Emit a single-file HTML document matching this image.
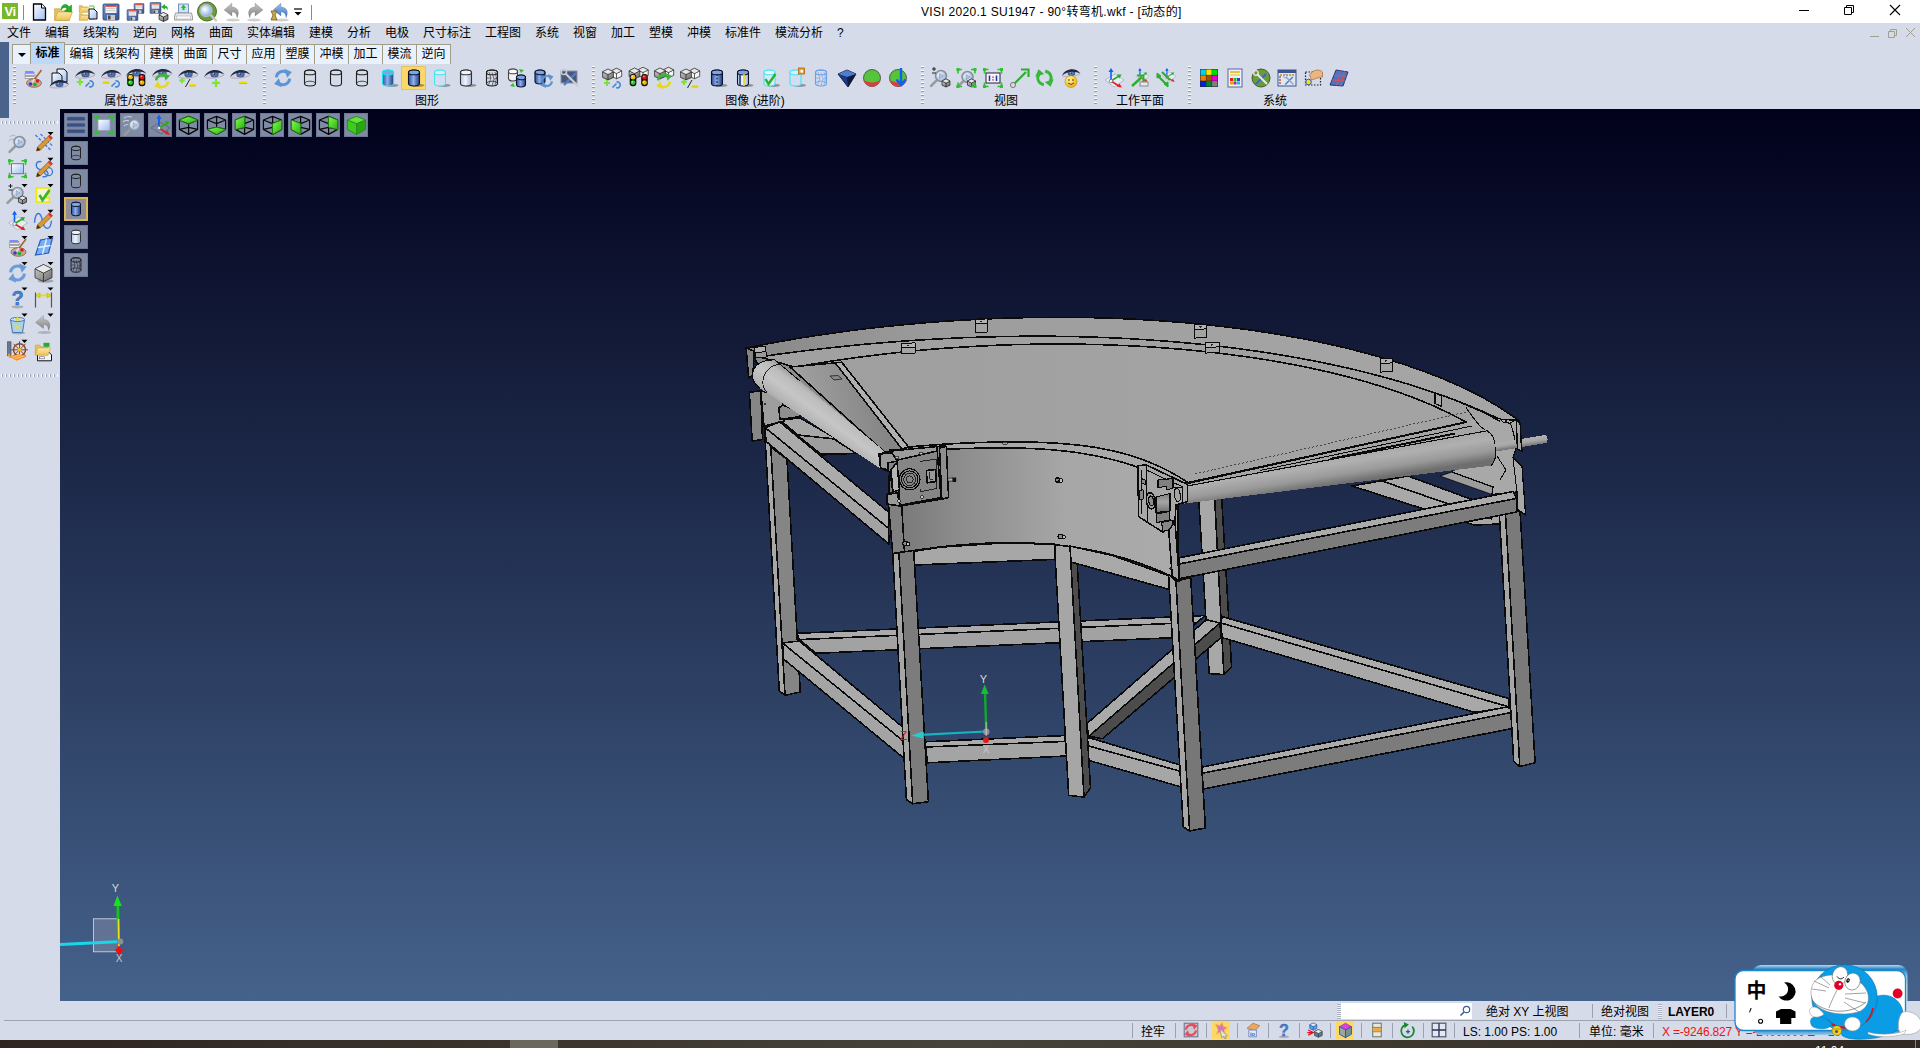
<!DOCTYPE html><html lang="zh"><head><meta charset="utf-8"><title>VISI 2020.1 SU1947 - 90°转弯机.wkf</title><style>
html,body{margin:0;padding:0;overflow:hidden}
body{width:1920px;height:1048px;overflow:hidden;position:relative;background:#d6dbe9;
 font-family:"Liberation Sans","Noto Sans CJK SC",sans-serif;font-size:12px;color:#000}
.a{position:absolute}
.t{position:absolute;white-space:nowrap;line-height:14px;height:14px}
#title{left:0;top:0;width:1920px;height:23px;background:#fff}
#menubar{left:0;top:23px;width:1920px;height:20px;background:#d6dbe9}
#lstrip{left:0;top:42px;width:9px;height:76px;background:#4a638a}
.tab{position:absolute;top:44px;height:20px;box-sizing:border-box;border:1px solid #a09d88;border-bottom:none;background:#e9f1fc;
 text-align:center;line-height:19px;font-size:12px}
.tab.on{top:42px;height:22px;background:#bdd9f7;font-weight:bold;line-height:21px;border-color:#a09d88}
.grip{position:absolute;width:3px;background:repeating-linear-gradient(180deg,#fff 0,#fff 1.5px,#8f98ae 1.5px,#8f98ae 2.5px,#d6dbe9 2.5px,#d6dbe9 4px)}
.hgrip{position:absolute;height:3px;background:repeating-linear-gradient(90deg,#fff 0,#fff 1px,#9aa3b8 1px,#9aa3b8 2px,#d6dbe9 2px,#d6dbe9 4px)}
.lbl{position:absolute;top:94px;height:14px;line-height:14px;font-size:12px;white-space:nowrap;transform:translateX(-50%)}
#view{left:60px;top:109px;width:1860px;height:892px;background:linear-gradient(180deg,#01011b 0%,#45628b 100%)}
.vb{position:absolute;width:24px;height:24px;background:#7f8aa5;box-sizing:border-box;border:1px solid #6e7892}
.vb.sel{background:#8e8f98;border:2px solid #d9b85c}
.sep{position:absolute;width:1px;background:#9aa0ad}
#task{left:0;top:1040px;width:1920px;height:8px;background:linear-gradient(90deg,#2e2420 0%,#3c362e 30%,#47433a 50%,#3f3a30 70%,#2f2823 100%)}
</style></head><body>
<svg width="0" height="0" style="position:absolute"><defs>
<linearGradient id="gBlueCyl" x1="0" x2="1" y1="0" y2="0"><stop offset="0" stop-color="#2b4f9e"/><stop offset=".45" stop-color="#8fb0ea"/><stop offset="1" stop-color="#1d3a80"/></linearGradient>
<linearGradient id="gPaleCyl" x1="0" x2="1" y1="0" y2="0"><stop offset="0" stop-color="#b8c8e6"/><stop offset=".45" stop-color="#eef3fc"/><stop offset="1" stop-color="#9fb2d6"/></linearGradient>
<linearGradient id="gDoc" x1="0" x2="1" y1="0" y2="1"><stop offset="0" stop-color="#ffffff"/><stop offset="1" stop-color="#9dbcf2"/></linearGradient>
<linearGradient id="gFolder" x1="0" x2="0" y1="0" y2="1"><stop offset="0" stop-color="#fbe7a4"/><stop offset="1" stop-color="#eec258"/></linearGradient>
<linearGradient id="gFloppy" x1="0" x2="1" y1="0" y2="1"><stop offset="0" stop-color="#6e8fca"/><stop offset="1" stop-color="#34528f"/></linearGradient>
<linearGradient id="gGrayArr" x1="0" x2="0" y1="0" y2="1"><stop offset="0" stop-color="#c8c8c8"/><stop offset="1" stop-color="#808080"/></linearGradient>
<linearGradient id="gBlueArr" x1="0" x2="0" y1="0" y2="1"><stop offset="0" stop-color="#9cc0ee"/><stop offset="1" stop-color="#3a74c0"/></linearGradient>
<linearGradient id="gCube" x1="0" x2="1" y1="0" y2="1"><stop offset="0" stop-color="#d0d0d0"/><stop offset="1" stop-color="#6c6c6c"/></linearGradient>
<radialGradient id="gIris" cx=".5" cy=".5" r=".5"><stop offset="0" stop-color="#20304e"/><stop offset=".35" stop-color="#5a7fb8"/><stop offset="1" stop-color="#3c5688"/></radialGradient>
<radialGradient id="gLens" cx=".4" cy=".4" r=".6"><stop offset="0" stop-color="#ffffff"/><stop offset="1" stop-color="#8db4e0"/></radialGradient>
<radialGradient id="gSmile" cx=".4" cy=".35" r=".65"><stop offset="0" stop-color="#fff7a0"/><stop offset="1" stop-color="#f0b000"/></radialGradient>
<linearGradient id="gGreenFace" x1="0" x2="1" y1="0" y2="1"><stop offset="0" stop-color="#7dff4a"/><stop offset="1" stop-color="#2fae16"/></linearGradient>

<linearGradient id="mShaft" gradientUnits="userSpaceOnUse" x1="1520" y1="438" x2="1521.5" y2="448"><stop offset="0" stop-color="#b4b4b4"/><stop offset=".5" stop-color="#a6a6a6"/><stop offset="1" stop-color="#6a6a6a"/></linearGradient>
<linearGradient id="mBlk" x1="0" x2="0" y1="0" y2="1"><stop offset="0" stop-color="#7c7c7c"/><stop offset=".45" stop-color="#a6a6a6"/><stop offset="1" stop-color="#6e6e6e"/></linearGradient>
<linearGradient id="mTri" gradientUnits="userSpaceOnUse" x1="800" y1="400" x2="870" y2="380"><stop offset="0" stop-color="#a2a2a2"/><stop offset="1" stop-color="#868686"/></linearGradient>
<linearGradient id="mWall" gradientUnits="userSpaceOnUse" x1="895" y1="0" x2="1175" y2="0">
 <stop offset="0" stop-color="#787878"/><stop offset=".25" stop-color="#8e8e8e"/><stop offset=".6" stop-color="#a6a6a6"/><stop offset="1" stop-color="#ababab"/></linearGradient>
<linearGradient id="mRollL" gradientUnits="userSpaceOnUse" x1="834" y1="399" x2="812" y2="429">
 <stop offset="0" stop-color="#5e5e5e"/><stop offset=".1" stop-color="#9c9c9c"/><stop offset=".28" stop-color="#bcbcbc"/><stop offset=".55" stop-color="#c6c6c6"/><stop offset=".85" stop-color="#b4b4b4"/><stop offset="1" stop-color="#9e9e9e"/></linearGradient>
<linearGradient id="mRollR" gradientUnits="userSpaceOnUse" x1="1335" y1="452" x2="1340" y2="484">
 <stop offset="0" stop-color="#a4a4a4"/><stop offset=".35" stop-color="#b0b0b0"/><stop offset=".7" stop-color="#9a9a9a"/><stop offset="1" stop-color="#6e6e6e"/></linearGradient>
<linearGradient id="mGuard" gradientUnits="userSpaceOnUse" x1="745" y1="0" x2="1520" y2="0">
 <stop offset="0" stop-color="#888888"/><stop offset=".25" stop-color="#9c9c9c"/><stop offset=".6" stop-color="#a2a2a2"/><stop offset="1" stop-color="#a6a6a6"/></linearGradient>
<linearGradient id="mBelt" gradientUnits="userSpaceOnUse" x1="840" y1="0" x2="1480" y2="0">
 <stop offset="0" stop-color="#9f9f9f"/><stop offset=".5" stop-color="#a3a3a3"/><stop offset="1" stop-color="#a3a3a3"/></linearGradient>
</defs></svg>
<div id="title" class="a"></div>
<div class="t" style="left:921px;top:5px;font-size:12px;letter-spacing:.3px" id="ttl">VISI 2020.1 SU1947 - 90°转弯机.wkf - [动态的]</div>
<svg class="a" style="left:1780px;top:0" width="140" height="23" viewBox="1780 0 140 23"><path d="M1799 10.5h10" stroke="#000" stroke-width="1" fill="none"/><path d="M1844.5 7.5h7v7h-7z M1846.5 7.5v-2h7v7h-2" stroke="#000" stroke-width="1" fill="none"/><path d="M1890 5l10 10M1900 5l-10 10" stroke="#000" stroke-width="1.1" fill="none"/></svg>
<div id="menubar" class="a"></div>
<div class="t" style="left:7px;top:26px">文件</div>
<div class="t" style="left:45px;top:26px">编辑</div>
<div class="t" style="left:83px;top:26px">线架构</div>
<div class="t" style="left:133px;top:26px">逆向</div>
<div class="t" style="left:171px;top:26px">网格</div>
<div class="t" style="left:209px;top:26px">曲面</div>
<div class="t" style="left:247px;top:26px">实体编辑</div>
<div class="t" style="left:309px;top:26px">建模</div>
<div class="t" style="left:347px;top:26px">分析</div>
<div class="t" style="left:385px;top:26px">电极</div>
<div class="t" style="left:423px;top:26px">尺寸标注</div>
<div class="t" style="left:485px;top:26px">工程图</div>
<div class="t" style="left:535px;top:26px">系统</div>
<div class="t" style="left:573px;top:26px">视窗</div>
<div class="t" style="left:611px;top:26px">加工</div>
<div class="t" style="left:649px;top:26px">塑模</div>
<div class="t" style="left:687px;top:26px">冲模</div>
<div class="t" style="left:725px;top:26px">标准件</div>
<div class="t" style="left:775px;top:26px">模流分析</div>
<div class="t" style="left:837px;top:26px">?</div>
<svg class="a" style="left:1860px;top:24px" width="60" height="18" viewBox="1860 24 60 18"><path d="M1870 36.5h9" stroke="#a39f8e" stroke-width="1" fill="none"/><path d="M1888.5 31.5h6v6h-6z M1890.5 31.5v-2h6v6h-2" stroke="#a39f8e" stroke-width="1" fill="none"/><path d="M1906 28l9 9M1915 28l-9 9" stroke="#a39f8e" stroke-width="1" fill="none"/></svg>
<div id="lstrip" class="a"></div>
<div class="tab" style="left:12px;width:19px"><svg width="17" height="19" viewBox="0 0 17 19" style="display:block"><path d="M5 8h8l-4 4z" fill="#000"/></svg></div>
<div class="tab on" style="left:30px;width:35px">标准</div>
<div class="tab" style="left:64px;width:35px">编辑</div>
<div class="tab" style="left:98px;width:47px">线架构</div>
<div class="tab" style="left:144px;width:35px">建模</div>
<div class="tab" style="left:178px;width:35px">曲面</div>
<div class="tab" style="left:212px;width:35px">尺寸</div>
<div class="tab" style="left:246px;width:35px">应用</div>
<div class="tab" style="left:280px;width:35px">塑膜</div>
<div class="tab" style="left:314px;width:35px">冲模</div>
<div class="tab" style="left:348px;width:35px">加工</div>
<div class="tab" style="left:382px;width:35px">模流</div>
<div class="tab" style="left:416px;width:35px">逆向</div>
<svg class="a" style="left:0px;top:0px" width="330" height="23" viewBox="0 0 330 23"><g transform="translate(10 11)" ><rect x="-8" y="-8" width="16" height="16" fill="#76b82a"/><text x="0" y="5" text-anchor="middle" font-family="Liberation Sans,sans-serif" font-weight="bold" font-size="13" fill="#fff" letter-spacing="-.5">Vi</text></g><g transform="translate(39.5 12)" ><path d="M-6 -8h8l4 4v12h-12z" fill="url(#gDoc)" stroke="#000" stroke-width="1.3"/><path d="M2 -8v4h4" fill="#fff" stroke="#000" stroke-width="1"/></g><g transform="translate(64 12)" ><g transform="translate(-1 1) scale(1.05)"><path d="M-8 -4h5l1.5 2h7.5v9h-14z" fill="#e8c060" stroke="#c09a38" stroke-width=".6"/><path d="M-8 7L-5 -1H9L6 7z" fill="url(#gFolder)" stroke="#c8a040" stroke-width=".6"/></g><path d="M-3 -2C-3 -8 3 -9 5 -5L7.5 -7L7.5 0L0.5 -1L3 -3C2 -5.5 -1 -5 -3 -2z" fill="#28b028" stroke="#0c7a0c" stroke-width=".5"/></g><g transform="translate(88 12)" ><g transform="translate(-4 -4) scale(0.6)"><path d="M-8 -4h5l1.5 2h7.5v9h-14z" fill="#e8c060" stroke="#c09a38" stroke-width=".6"/><path d="M-8 7L-5 -1H9L6 7z" fill="url(#gFolder)" stroke="#c8a040" stroke-width=".6"/></g><g transform="translate(-4 4) scale(0.6)"><path d="M-8 -4h5l1.5 2h7.5v9h-14z" fill="#e8c060" stroke="#c09a38" stroke-width=".6"/><path d="M-8 7L-5 -1H9L6 7z" fill="url(#gFolder)" stroke="#c8a040" stroke-width=".6"/></g><path d="M1 -6h5M6 -6v3M1 7h5M6 7v-2" stroke="#50c050" stroke-width="1" fill="none"/><path d="M1 -3h5l3 3v7h-8z" fill="url(#gDoc)" stroke="#111" stroke-width="1"/></g><g transform="translate(111 12)" ><g transform="translate(0 0) scale(1)"><rect x="-8" y="-8" width="16" height="16" rx="1" fill="url(#gFloppy)" stroke="#2c4478" stroke-width=".8"/><rect x="-5.5" y="-7" width="11" height="8" fill="#f2f2f2"/><rect x="-5.5" y="-7" width="11" height="1.8" fill="#e83828"/><path d="M-4.5 -3.5h9M-4.5 -1.5h9" stroke="#bbb" stroke-width=".7"/><rect x="-4" y="3" width="8" height="5" fill="#c8c8c8"/><rect x="-3" y="3.5" width="2.5" height="4" fill="#444"/></g></g><g transform="translate(135.5 12)" ><g transform="translate(3.5 -3.5) scale(0.62)"><rect x="-8" y="-8" width="16" height="16" rx="1" fill="url(#gFloppy)" stroke="#2c4478" stroke-width=".8"/><rect x="-5.5" y="-7" width="11" height="8" fill="#f2f2f2"/><rect x="-5.5" y="-7" width="11" height="1.8" fill="#e83828"/><path d="M-4.5 -3.5h9M-4.5 -1.5h9" stroke="#bbb" stroke-width=".7"/><rect x="-4" y="3" width="8" height="5" fill="#c8c8c8"/><rect x="-3" y="3.5" width="2.5" height="4" fill="#444"/></g><g transform="translate(-3 3) scale(0.68)"><rect x="-8" y="-8" width="16" height="16" rx="1" fill="url(#gFloppy)" stroke="#2c4478" stroke-width=".8"/><rect x="-5.5" y="-7" width="11" height="8" fill="#f2f2f2"/><rect x="-5.5" y="-7" width="11" height="1.8" fill="#e83828"/><path d="M-4.5 -3.5h9M-4.5 -1.5h9" stroke="#bbb" stroke-width=".7"/><rect x="-4" y="3" width="8" height="5" fill="#c8c8c8"/><rect x="-3" y="3.5" width="2.5" height="4" fill="#444"/></g></g><g transform="translate(159 12)" ><g transform="translate(-3.5 -4) scale(0.68)"><rect x="-8" y="-8" width="16" height="16" rx="1" fill="url(#gFloppy)" stroke="#2c4478" stroke-width=".8"/><rect x="-5.5" y="-7" width="11" height="8" fill="#f2f2f2"/><rect x="-5.5" y="-7" width="11" height="1.8" fill="#e83828"/><path d="M-4.5 -3.5h9M-4.5 -1.5h9" stroke="#bbb" stroke-width=".7"/><rect x="-4" y="3" width="8" height="5" fill="#c8c8c8"/><rect x="-3" y="3.5" width="2.5" height="4" fill="#444"/></g><path d="M0.0 2.75L4.5 0.5L9.0 2.75V7.475L4.5 9.5L0.0 7.475z" fill="url(#gCube)" stroke="#1a1a1a" stroke-width=".7"/><path d="M0.0 2.75L4.5 5L9.0 2.75M4.5 5V9.5" fill="none" stroke="#1a1a1a" stroke-width=".7"/><path d="M0.0 2.75L4.5 0.5L9.0 2.75L4.5 5z" fill="#e8e8e8" stroke="#1a1a1a" stroke-width=".5"/><path d="M2 -5L6 -8V-6.2C9 -6 9.5 -3 8 -1.5C8.3 -3.3 7.5 -4 6 -4V-2.5z" fill="#28b028"/></g><g transform="translate(183.5 12)" ><rect x="-5" y="-8" width="10" height="9" fill="#cfe0fa" stroke="#6080b0" stroke-width=".8"/><path d="M0 -7.5L-2.5 -4h1.5v2h2v-2h1.5z" fill="#20c020"/><path d="M-8 1h16l1 4v3h-18v-3z" fill="#e8e8e8" stroke="#888" stroke-width=".8"/><rect x="-7" y="4" width="14" height="3" fill="#fafafa" stroke="#aaa" stroke-width=".5"/></g><g transform="translate(207 11.5)" ><circle cx="0" cy="0" r="9.5" fill="#6a9c3c" stroke="#44701f" stroke-width="1"/><path d="M4 4L9 9" stroke="#c8c8c8" stroke-width="2.4" stroke-linecap="round"/><circle cx="-1" cy="-1" r="6" fill="url(#gLens)" stroke="#b0b8c4" stroke-width="1.6"/></g><g transform="translate(232 12)" ><g transform="translate(0 0) scale(1 1)"><ellipse cx="1" cy="8" rx="7" ry="1.5" fill="#00000030"/><path d="M-8 -2L0 -9V-5C6 -5 8 0 5 6C5 2 3 0 0 0V4z" fill="url(#gGrayArr)" stroke="#00000040" stroke-width=".5"/></g></g><g transform="translate(255 12)" ><g transform="translate(0 0) scale(-1 1)"><ellipse cx="1" cy="8" rx="7" ry="1.5" fill="#00000030"/><path d="M-8 -2L0 -9V-5C6 -5 8 0 5 6C5 2 3 0 0 0V4z" fill="url(#gGrayArr)" stroke="#00000040" stroke-width=".5"/></g></g><g transform="translate(279 12)" ><g transform="translate(2 0) scale(1 1)"><ellipse cx="1" cy="8" rx="7" ry="1.5" fill="#00000030"/><path d="M-8 -2L0 -9V-5C6 -5 8 0 5 6C5 2 3 0 0 0V4z" fill="url(#gBlueArr)" stroke="#00000040" stroke-width=".5"/></g><path d="M-8 -1h6l-2 4 2 5h-6l2 -5z" fill="#c8a850" stroke="#7a5c18" stroke-width=".8"/></g><g transform="translate(298 12)" ><path d="M-4 -3h8" stroke="#000" stroke-width="1.2"/><path d="M-3.5 0h7l-3.5 3.5z" fill="#000"/></g><path d="M23.5 5v15M311.5 5v15" stroke="#8a8a8a" stroke-width="1"/></svg>
<svg class="a" style="left:0px;top:64px" width="1400" height="30" viewBox="0 64 1400 30"><rect x="401.5" y="66.5" width="24" height="23" fill="#fbd868" stroke="#e4c262" stroke-width="1"/><g transform="translate(33 78)" ><path d="M-8 -7h8l2 2h-10z" fill="#7d8cff"/><path d="M-8 -4.5h9l1.5 2h-10.5z" fill="#e8e8ee" stroke="#666" stroke-width=".5"/><path d="M-8 -1.5h9l1.5 2h-10.5z" fill="#f4f4f4" stroke="#666" stroke-width=".5"/><ellipse cx="1" cy="5" rx="7.5" ry="4.3" fill="#c9a58c" stroke="#7a5038" stroke-width=".7"/><circle cx="-2.5" cy="6" r="1.8" fill="#2040e0"/><circle cx="2" cy="6.5" r="1.8" fill="#18b030"/><circle cx="4.5" cy="3" r="1.8" fill="#d02020"/><path d="M8.5 -8L1 2" stroke="#b0602a" stroke-width="1.6"/><path d="M1.5 1L-1 4.5" stroke="#ddd" stroke-width="2"/></g><g transform="translate(59 78)" ><path d="M-2 -9h7l3 3v10h-10z" fill="url(#gDoc)" stroke="#111" stroke-width="1"/><path d="M-7 -5h7l3 3v8h-10z" fill="url(#gDoc)" stroke="#111" stroke-width="1"/><g transform="translate(0 6) scale(0.95)"><path d="M-9.5 3C-6 -4 5.5 -5 10 0.8C6 4 -5 4.6 -9.5 3z" fill="#cfd3ea"/><ellipse cx="0.5" cy="0" rx="4.2" ry="3.5" fill="url(#gIris)"/><circle cx="-.6" cy="-1" r=".8" fill="#c8d8f4"/><path d="M-10 3C-6.5 -5.5 6 -6.5 10.5 0.8C5 -2.8 -5 -2.2 -10 3z" fill="#23283c"/><path d="M-9.5 3.4C-5 4.9 5 4.4 10 1.1" fill="none" stroke="#b493a2" stroke-width=".7"/></g></g><g transform="translate(85 78)" ><g transform="translate(0 -4) scale(1.0)"><path d="M-9.5 3C-6 -4 5.5 -5 10 0.8C6 4 -5 4.6 -9.5 3z" fill="#cfd3ea"/><ellipse cx="0.5" cy="0" rx="4.2" ry="3.5" fill="url(#gIris)"/><circle cx="-.6" cy="-1" r=".8" fill="#c8d8f4"/><path d="M-10 3C-6.5 -5.5 6 -6.5 10.5 0.8C5 -2.8 -5 -2.2 -10 3z" fill="#23283c"/><path d="M-9.5 3.4C-5 4.9 5 4.4 10 1.1" fill="none" stroke="#b493a2" stroke-width=".7"/></g><path d="M-8.2 4h6.4M-5 0.7999999999999998v6.4" stroke="#7fe23a" stroke-width="2.2" fill="none"/><path d="M0.5 8.5L4.5 4.5" stroke="#4a86d8" stroke-width="1.7" fill="none"/><path d="M4.5 3a3 3 0 1 1 -.5 5.6" stroke="#4a86d8" stroke-width="1.6" fill="none"/></g><g transform="translate(111 78)" ><g transform="translate(0 -4) scale(1.0)"><path d="M-9.5 3C-6 -4 5.5 -5 10 0.8C6 4 -5 4.6 -9.5 3z" fill="#cfd3ea"/><ellipse cx="0.5" cy="0" rx="4.2" ry="3.5" fill="url(#gIris)"/><circle cx="-.6" cy="-1" r=".8" fill="#c8d8f4"/><path d="M-10 3C-6.5 -5.5 6 -6.5 10.5 0.8C5 -2.8 -5 -2.2 -10 3z" fill="#23283c"/><path d="M-9.5 3.4C-5 4.9 5 4.4 10 1.1" fill="none" stroke="#b493a2" stroke-width=".7"/></g><path d="M-8.2 4h6.4" stroke="#f0e400" stroke-width="2.2" fill="none"/><path d="M-8.2 5h6.4" stroke="#b8a800" stroke-width=".6" fill="none"/><path d="M0.5 8.5L4.5 4.5" stroke="#4a86d8" stroke-width="1.7" fill="none"/><path d="M4.5 3a3 3 0 1 1 -.5 5.6" stroke="#4a86d8" stroke-width="1.6" fill="none"/></g><g transform="translate(136 78)" ><g transform="translate(0 -5) scale(1.0)"><path d="M-9.5 3C-6 -4 5.5 -5 10 0.8C6 4 -5 4.6 -9.5 3z" fill="#cfd3ea"/><ellipse cx="0.5" cy="0" rx="4.2" ry="3.5" fill="url(#gIris)"/><circle cx="-.6" cy="-1" r=".8" fill="#c8d8f4"/><path d="M-10 3C-6.5 -5.5 6 -6.5 10.5 0.8C5 -2.8 -5 -2.2 -10 3z" fill="#23283c"/><path d="M-9.5 3.4C-5 4.9 5 4.4 10 1.1" fill="none" stroke="#b493a2" stroke-width=".7"/></g><rect x="-8.8" y="-4.1" width="6.6" height="12.399999999999999" rx="3" fill="#0c0c0c"/><circle cx="-5.5" cy="-0.7999999999999998" r="2.4" fill="#f0c000"/><circle cx="-6.2" cy="-1.5" r=".8" fill="#ffffffaa"/><circle cx="-5.5" cy="4.6000000000000005" r="2.4" fill="#20d020"/><circle cx="-6.2" cy="3.9000000000000004" r=".8" fill="#ffffffaa"/><rect x="2.7" y="-4.1" width="6.6" height="12.399999999999999" rx="3" fill="#0c0c0c"/><circle cx="6" cy="-0.7999999999999998" r="2.4" fill="#e01010"/><circle cx="5.3" cy="-1.5" r=".8" fill="#ffffffaa"/><circle cx="6" cy="4.6000000000000005" r="2.4" fill="#f0b000"/><circle cx="5.3" cy="3.9000000000000004" r=".8" fill="#ffffffaa"/></g><g transform="translate(162 78)" ><g transform="translate(0 -5) scale(1.0)"><path d="M-9.5 3C-6 -4 5.5 -5 10 0.8C6 4 -5 4.6 -9.5 3z" fill="#cfd3ea"/><ellipse cx="0.5" cy="0" rx="4.2" ry="3.5" fill="url(#gIris)"/><circle cx="-.6" cy="-1" r=".8" fill="#c8d8f4"/><path d="M-10 3C-6.5 -5.5 6 -6.5 10.5 0.8C5 -2.8 -5 -2.2 -10 3z" fill="#23283c"/><path d="M-9.5 3.4C-5 4.9 5 4.4 10 1.1" fill="none" stroke="#b493a2" stroke-width=".7"/></g><g transform="translate(0 3) scale(0.95)"><path d="M-6.2 -0.6A6.2 6.2 0 0 1 3.6 -5" fill="none" stroke="#3fb53a" stroke-width="2.7"/><path d="M1.2 -8.6L8.2 -5.6L3.8 -0.2z" fill="#3fb53a"/><g transform="rotate(180)"><path d="M-6.2 -0.6A6.2 6.2 0 0 1 3.6 -5" fill="none" stroke="#e6d820" stroke-width="2.7"/><path d="M1.2 -8.6L8.2 -5.6L3.8 -0.2z" fill="#e6d820"/></g></g></g><g transform="translate(188 78)" ><g transform="translate(0 -4) scale(1.0)"><path d="M-9.5 3C-6 -4 5.5 -5 10 0.8C6 4 -5 4.6 -9.5 3z" fill="#cfd3ea"/><ellipse cx="0.5" cy="0" rx="4.2" ry="3.5" fill="url(#gIris)"/><circle cx="-.6" cy="-1" r=".8" fill="#c8d8f4"/><path d="M-10 3C-6.5 -5.5 6 -6.5 10.5 0.8C5 -2.8 -5 -2.2 -10 3z" fill="#23283c"/><path d="M-9.5 3.4C-5 4.9 5 4.4 10 1.1" fill="none" stroke="#b493a2" stroke-width=".7"/></g><path d="M-8.8 2.5h5.6M-6 -0.2999999999999998v5.6" stroke="#7fe23a" stroke-width="2.2" fill="none"/><path d="M-2.5 9L2 1" stroke="#222" stroke-width="1"/><path d="M1.2999999999999998 7h6.4" stroke="#f0e400" stroke-width="2.2" fill="none"/><path d="M1.2999999999999998 8h6.4" stroke="#b8a800" stroke-width=".6" fill="none"/></g><g transform="translate(214 78)" ><g transform="translate(0 -4) scale(1.0)"><path d="M-9.5 3C-6 -4 5.5 -5 10 0.8C6 4 -5 4.6 -9.5 3z" fill="#cfd3ea"/><ellipse cx="0.5" cy="0" rx="4.2" ry="3.5" fill="url(#gIris)"/><circle cx="-.6" cy="-1" r=".8" fill="#c8d8f4"/><path d="M-10 3C-6.5 -5.5 6 -6.5 10.5 0.8C5 -2.8 -5 -2.2 -10 3z" fill="#23283c"/><path d="M-9.5 3.4C-5 4.9 5 4.4 10 1.1" fill="none" stroke="#b493a2" stroke-width=".7"/></g><path d="M-2 5h8M2 1v8" stroke="#7fe23a" stroke-width="2.2" fill="none"/></g><g transform="translate(240 78)" ><g transform="translate(0 -4) scale(1.0)"><path d="M-9.5 3C-6 -4 5.5 -5 10 0.8C6 4 -5 4.6 -9.5 3z" fill="#cfd3ea"/><ellipse cx="0.5" cy="0" rx="4.2" ry="3.5" fill="url(#gIris)"/><circle cx="-.6" cy="-1" r=".8" fill="#c8d8f4"/><path d="M-10 3C-6.5 -5.5 6 -6.5 10.5 0.8C5 -2.8 -5 -2.2 -10 3z" fill="#23283c"/><path d="M-9.5 3.4C-5 4.9 5 4.4 10 1.1" fill="none" stroke="#b493a2" stroke-width=".7"/></g><path d="M-1.2000000000000002 4.5h8.4" stroke="#f0e400" stroke-width="2.2" fill="none"/><path d="M-1.2000000000000002 5.5h8.4" stroke="#b8a800" stroke-width=".6" fill="none"/></g><g transform="translate(283 78)" ><g transform="translate(0 0) scale(1.08)"><path d="M-6.2 -0.6A6.2 6.2 0 0 1 3.6 -5" fill="none" stroke="#5c94d6" stroke-width="2.7"/><path d="M1.2 -8.6L8.2 -5.6L3.8 -0.2z" fill="#5c94d6"/><g transform="rotate(180)"><path d="M-6.2 -0.6A6.2 6.2 0 0 1 3.6 -5" fill="none" stroke="#5c94d6" stroke-width="2.7"/><path d="M1.2 -8.6L8.2 -5.6L3.8 -0.2z" fill="#5c94d6"/></g></g></g><g transform="translate(310 78)" ><path d="M-5.5 -5.6V5.6A5.5 2.4 0 0 0 5.5 5.6V-5.6A5.5 2.4 0 0 0 -5.5 -5.6z" fill="none" stroke="#222" stroke-width="1.1"/><ellipse cx="0" cy="-5.6" rx="5.5" ry="2.4" fill="none" stroke="#222" stroke-width="1.1"/><path d="M-5.5 5.6A5.5 2.4 0 0 1 5.5 5.6" fill="none" stroke="#222" stroke-width="0.77"/></g><g transform="translate(336 78)" ><path d="M-5.5 -5.6V5.6A5.5 2.4 0 0 0 5.5 5.6V-5.6A5.5 2.4 0 0 0 -5.5 -5.6z" fill="none" stroke="#222" stroke-width="1.1"/><ellipse cx="0" cy="-5.6" rx="5.5" ry="2.4" fill="none" stroke="#222" stroke-width="1.1"/></g><g transform="translate(362 78)" ><path d="M-5.5 -5.6V5.6A5.5 2.4 0 0 0 5.5 5.6V-5.6A5.5 2.4 0 0 0 -5.5 -5.6z" fill="none" stroke="#222" stroke-width="1.1"/><ellipse cx="0" cy="-5.6" rx="5.5" ry="2.4" fill="none" stroke="#222" stroke-width="1.1"/><path d="M-5.5 5.6A5.5 2.4 0 0 1 5.5 5.6" fill="none" stroke="#222" stroke-width="0.77"/></g><g transform="translate(388 78)" ><ellipse cx="4" cy="7.3999999999999995" rx="6.5" ry="1.6" fill="#00000055"/><path d="M-5.5 -5.6V5.6A5.5 2.4 0 0 0 5.5 5.6V-5.6A5.5 2.4 0 0 0 -5.5 -5.6z" fill="url(#gBlueCyl)" stroke="#20e0f0" stroke-width="1.1"/><ellipse cx="0" cy="-5.6" rx="5.5" ry="2.4" fill="#7fa4e4" stroke="#20e0f0" stroke-width="1.1"/></g><g transform="translate(414 78)" ><ellipse cx="4" cy="7.3999999999999995" rx="6.5" ry="1.6" fill="#00000055"/><path d="M-5.5 -5.6V5.6A5.5 2.4 0 0 0 5.5 5.6V-5.6A5.5 2.4 0 0 0 -5.5 -5.6z" fill="url(#gBlueCyl)" stroke="#0a1430" stroke-width="1.1"/><ellipse cx="0" cy="-5.6" rx="5.5" ry="2.4" fill="#7fa4e4" stroke="#0a1430" stroke-width="1.1"/></g><g transform="translate(440 78)" ><ellipse cx="4" cy="7.3999999999999995" rx="6.5" ry="1.6" fill="#00000055"/><path d="M-5.5 -5.6V5.6A5.5 2.4 0 0 0 5.5 5.6V-5.6A5.5 2.4 0 0 0 -5.5 -5.6z" fill="#d4dcf0" stroke="#40e8f0" stroke-width="1.1"/><ellipse cx="0" cy="-5.6" rx="5.5" ry="2.4" fill="#e4eaf8" stroke="#40e8f0" stroke-width="1.1"/></g><g transform="translate(466 78)" ><ellipse cx="4" cy="7.3999999999999995" rx="6.5" ry="1.6" fill="#00000055"/><path d="M-5.5 -5.6V5.6A5.5 2.4 0 0 0 5.5 5.6V-5.6A5.5 2.4 0 0 0 -5.5 -5.6z" fill="url(#gPaleCyl)" stroke="#333" stroke-width="1.1"/><ellipse cx="0" cy="-5.6" rx="5.5" ry="2.4" fill="#eef2fa" stroke="#333" stroke-width="1.1"/></g><g transform="translate(492 78)" ><path d="M-5.5 -5.6V5.6A5.5 2.4 0 0 0 5.5 5.6V-5.6A5.5 2.4 0 0 0 -5.5 -5.6z" fill="none" stroke="#222" stroke-width="1.1"/><ellipse cx="0" cy="-5.6" rx="5.5" ry="2.4" fill="none" stroke="#222" stroke-width="1.1"/><path d="M-5.5 5.6A5.5 2.4 0 0 1 5.5 5.6" fill="none" stroke="#222" stroke-width="0.77"/><path d="M-3 -6L-1 0L-3.5 7M0 -5.5L2 1L0 8M3 -6L4.5 0L3 7M-5 0L-1 0M2 1L5.5 0" stroke="#222" stroke-width=".6" fill="none"/></g><g transform="translate(517 78)" ><path d="M-8.5 -6.6V0.6000000000000001A4.5 2.4 0 0 0 0.5 0.6000000000000001V-6.6A4.5 2.4 0 0 0 -8.5 -6.6z" fill="#f2f2f2" stroke="#444" stroke-width="1.1"/><ellipse cx="-4" cy="-6.6" rx="4.5" ry="2.4" fill="#fff" stroke="#444" stroke-width="1.1"/><path d="M-0.5 -0.6000000000000001V6.6A4.5 2.4 0 0 0 8.5 6.6V-0.6000000000000001A4.5 2.4 0 0 0 -0.5 -0.6000000000000001z" fill="url(#gBlueCyl)" stroke="#0a1430" stroke-width="1.1"/><ellipse cx="4" cy="-0.6000000000000001" rx="4.5" ry="2.4" fill="#7fa4e4" stroke="#0a1430" stroke-width="1.1"/><path d="M2 -9l5 1-3 3z" fill="#30c030"/><path d="M-2 9l-5-1 3-3z" fill="#30c030"/></g><g transform="translate(543 78)" ><path d="M-8.0 -5.6V3.6A5.0 2.4 0 0 0 2.0 3.6V-5.6A5.0 2.4 0 0 0 -8.0 -5.6z" fill="url(#gBlueCyl)" stroke="#0a1430" stroke-width="1.1"/><ellipse cx="-3" cy="-5.6" rx="5.0" ry="2.4" fill="#7fa4e4" stroke="#0a1430" stroke-width="1.1"/><g transform="translate(4 3) scale(0.8)"><path d="M-6.2 -0.6A6.2 6.2 0 0 1 3.6 -5" fill="none" stroke="#5c94d6" stroke-width="2.7"/><path d="M1.2 -8.6L8.2 -5.6L3.8 -0.2z" fill="#5c94d6"/><g transform="rotate(180)"><path d="M-6.2 -0.6A6.2 6.2 0 0 1 3.6 -5" fill="none" stroke="#5c94d6" stroke-width="2.7"/><path d="M1.2 -8.6L8.2 -5.6L3.8 -0.2z" fill="#5c94d6"/></g></g></g><g transform="translate(570 78)" ><rect x="-9" y="-7" width="16" height="12" fill="#4a5878" stroke="#8a93a8" stroke-width="1"/><path d="M-6 7L6 -5" stroke="#4a7ed0" stroke-width="2.4"/><path d="M-5 -5L8 8" stroke="#c8ccd4" stroke-width="2.2"/><circle cx="-6" cy="-6" r="2.6" fill="none" stroke="#c8ccd4" stroke-width="1.4"/></g><g transform="translate(612 78)" ><path d="M-0.7000000000000002 -7.1L4.5 -9.7L9.7 -7.1V-1.6399999999999997L4.5 0.7000000000000002L-0.7000000000000002 -1.6399999999999997z" fill="#f4f4f4" stroke="#1a1a1a" stroke-width=".7"/><path d="M-0.7000000000000002 -7.1L4.5 -4.5L9.7 -7.1M4.5 -4.5V0.7000000000000002" fill="none" stroke="#1a1a1a" stroke-width=".7"/><path d="M-0.7000000000000002 -7.1L4.5 -9.7L9.7 -7.1L4.5 -4.5z" fill="#e8e8e8" stroke="#1a1a1a" stroke-width=".5"/><path d="M-9.4 -6.2L-4 -8.9L1.4000000000000004 -6.2V-0.5299999999999994L-4 1.9000000000000004L-9.4 -0.5299999999999994z" fill="url(#gCube)" stroke="#1a1a1a" stroke-width=".7"/><path d="M-9.4 -6.2L-4 -3.5L1.4000000000000004 -6.2M-4 -3.5V1.9000000000000004" fill="none" stroke="#1a1a1a" stroke-width=".7"/><path d="M-9.4 -6.2L-4 -8.9L1.4000000000000004 -6.2L-4 -3.5z" fill="#e8e8e8" stroke="#1a1a1a" stroke-width=".5"/><path d="M-8 5h6M-5 2v6" stroke="#7fe23a" stroke-width="2.2" fill="none"/><path d="M0.5 9.5L4.5 5.5" stroke="#4a86d8" stroke-width="1.7" fill="none"/><path d="M4.5 4a3 3 0 1 1 -.5 5.6" stroke="#4a86d8" stroke-width="1.6" fill="none"/></g><g transform="translate(638.5 78)" ><path d="M-0.7000000000000002 -8.1L4.5 -10.7L9.7 -8.1V-2.6399999999999997L4.5 -0.2999999999999998L-0.7000000000000002 -2.6399999999999997z" fill="#f4f4f4" stroke="#1a1a1a" stroke-width=".7"/><path d="M-0.7000000000000002 -8.1L4.5 -5.5L9.7 -8.1M4.5 -5.5V-0.2999999999999998" fill="none" stroke="#1a1a1a" stroke-width=".7"/><path d="M-0.7000000000000002 -8.1L4.5 -10.7L9.7 -8.1L4.5 -5.5z" fill="#e8e8e8" stroke="#1a1a1a" stroke-width=".5"/><path d="M-9.4 -7.2L-4 -9.9L1.4000000000000004 -7.2V-1.5299999999999994L-4 0.9000000000000004L-9.4 -1.5299999999999994z" fill="url(#gCube)" stroke="#1a1a1a" stroke-width=".7"/><path d="M-9.4 -7.2L-4 -4.5L1.4000000000000004 -7.2M-4 -4.5V0.9000000000000004" fill="none" stroke="#1a1a1a" stroke-width=".7"/><path d="M-9.4 -7.2L-4 -9.9L1.4000000000000004 -7.2L-4 -4.5z" fill="#e8e8e8" stroke="#1a1a1a" stroke-width=".5"/><rect x="-8.8" y="-4.1" width="6.6" height="12.399999999999999" rx="3" fill="#0c0c0c"/><circle cx="-5.5" cy="-0.7999999999999998" r="2.4" fill="#f0c000"/><circle cx="-6.2" cy="-1.5" r=".8" fill="#ffffffaa"/><circle cx="-5.5" cy="4.6000000000000005" r="2.4" fill="#20d020"/><circle cx="-6.2" cy="3.9000000000000004" r=".8" fill="#ffffffaa"/><rect x="2.7" y="-4.1" width="6.6" height="12.399999999999999" rx="3" fill="#0c0c0c"/><circle cx="6" cy="-0.7999999999999998" r="2.4" fill="#e01010"/><circle cx="5.3" cy="-1.5" r=".8" fill="#ffffffaa"/><circle cx="6" cy="4.6000000000000005" r="2.4" fill="#f0b000"/><circle cx="5.3" cy="3.9000000000000004" r=".8" fill="#ffffffaa"/></g><g transform="translate(664 78)" ><path d="M-0.7000000000000002 -8.1L4.5 -10.7L9.7 -8.1V-2.6399999999999997L4.5 -0.2999999999999998L-0.7000000000000002 -2.6399999999999997z" fill="#f4f4f4" stroke="#1a1a1a" stroke-width=".7"/><path d="M-0.7000000000000002 -8.1L4.5 -5.5L9.7 -8.1M4.5 -5.5V-0.2999999999999998" fill="none" stroke="#1a1a1a" stroke-width=".7"/><path d="M-0.7000000000000002 -8.1L4.5 -10.7L9.7 -8.1L4.5 -5.5z" fill="#e8e8e8" stroke="#1a1a1a" stroke-width=".5"/><path d="M-9.4 -7.2L-4 -9.9L1.4000000000000004 -7.2V-1.5299999999999994L-4 0.9000000000000004L-9.4 -1.5299999999999994z" fill="url(#gCube)" stroke="#1a1a1a" stroke-width=".7"/><path d="M-9.4 -7.2L-4 -4.5L1.4000000000000004 -7.2M-4 -4.5V0.9000000000000004" fill="none" stroke="#1a1a1a" stroke-width=".7"/><path d="M-9.4 -7.2L-4 -9.9L1.4000000000000004 -7.2L-4 -4.5z" fill="#e8e8e8" stroke="#1a1a1a" stroke-width=".5"/><g transform="translate(0 3) scale(0.95)"><path d="M-6.2 -0.6A6.2 6.2 0 0 1 3.6 -5" fill="none" stroke="#3fb53a" stroke-width="2.7"/><path d="M1.2 -8.6L8.2 -5.6L3.8 -0.2z" fill="#3fb53a"/><g transform="rotate(180)"><path d="M-6.2 -0.6A6.2 6.2 0 0 1 3.6 -5" fill="none" stroke="#e6d820" stroke-width="2.7"/><path d="M1.2 -8.6L8.2 -5.6L3.8 -0.2z" fill="#e6d820"/></g></g></g><g transform="translate(690 78)" ><path d="M-0.7000000000000002 -7.1L4.5 -9.7L9.7 -7.1V-1.6399999999999997L4.5 0.7000000000000002L-0.7000000000000002 -1.6399999999999997z" fill="#f4f4f4" stroke="#1a1a1a" stroke-width=".7"/><path d="M-0.7000000000000002 -7.1L4.5 -4.5L9.7 -7.1M4.5 -4.5V0.7000000000000002" fill="none" stroke="#1a1a1a" stroke-width=".7"/><path d="M-0.7000000000000002 -7.1L4.5 -9.7L9.7 -7.1L4.5 -4.5z" fill="#e8e8e8" stroke="#1a1a1a" stroke-width=".5"/><path d="M-9.4 -6.2L-4 -8.9L1.4000000000000004 -6.2V-0.5299999999999994L-4 1.9000000000000004L-9.4 -0.5299999999999994z" fill="url(#gCube)" stroke="#1a1a1a" stroke-width=".7"/><path d="M-9.4 -6.2L-4 -3.5L1.4000000000000004 -6.2M-4 -3.5V1.9000000000000004" fill="none" stroke="#1a1a1a" stroke-width=".7"/><path d="M-9.4 -6.2L-4 -8.9L1.4000000000000004 -6.2L-4 -3.5z" fill="#e8e8e8" stroke="#1a1a1a" stroke-width=".5"/><path d="M-8.8 4h5.6M-6 1.2000000000000002v5.6" stroke="#7fe23a" stroke-width="2.2" fill="none"/><path d="M-2.5 10L2 2" stroke="#222" stroke-width="1"/><path d="M1.7999999999999998 8h6.4" stroke="#f0e400" stroke-width="2.2" fill="none"/><path d="M1.7999999999999998 9h6.4" stroke="#b8a800" stroke-width=".6" fill="none"/></g><g transform="translate(717 78)" ><ellipse cx="4" cy="7.3999999999999995" rx="6.5" ry="1.6" fill="#00000055"/><path d="M-5.5 -5.6V5.6A5.5 2.4 0 0 0 5.5 5.6V-5.6A5.5 2.4 0 0 0 -5.5 -5.6z" fill="url(#gBlueCyl)" stroke="#0a1430" stroke-width="1.1"/><ellipse cx="0" cy="-5.6" rx="5.5" ry="2.4" fill="#7fa4e4" stroke="#0a1430" stroke-width="1.1"/><path d="M0 -4V8" stroke="#111" stroke-width="1" stroke-dasharray="2 1.5"/></g><g transform="translate(743 78)" ><ellipse cx="4" cy="7.3999999999999995" rx="6.5" ry="1.6" fill="#00000055"/><path d="M-5.5 -5.6V5.6A5.5 2.4 0 0 0 5.5 5.6V-5.6A5.5 2.4 0 0 0 -5.5 -5.6z" fill="url(#gPaleCyl)" stroke="#0a1430" stroke-width="1.1"/><ellipse cx="0" cy="-5.6" rx="5.5" ry="2.4" fill="#7fa4e4" stroke="#0a1430" stroke-width="1.1"/><path d="M1 -4V8" stroke="#e8d820" stroke-width="1.6"/><path d="M-3 -4V8" stroke="#1d3a80" stroke-width="1.6"/></g><g transform="translate(769.5 78)" ><ellipse cx="4" cy="7.3999999999999995" rx="6.5" ry="1.6" fill="#00000055"/><path d="M-5.5 -5.6V5.6A5.5 2.4 0 0 0 5.5 5.6V-5.6A5.5 2.4 0 0 0 -5.5 -5.6z" fill="#dfe6f6" stroke="#40e8f0" stroke-width="1.1"/><ellipse cx="0" cy="-5.6" rx="5.5" ry="2.4" fill="#eef2fa" stroke="#40e8f0" stroke-width="1.1"/><path d="M-4 1L-1 6L6 -4" stroke="#28b428" stroke-width="2.4" fill="none"/></g><g transform="translate(795.5 78)" ><ellipse cx="4" cy="7.3999999999999995" rx="6.5" ry="1.6" fill="#00000055"/><path d="M-5.5 -5.6V5.6A5.5 2.4 0 0 0 5.5 5.6V-5.6A5.5 2.4 0 0 0 -5.5 -5.6z" fill="#d4dcf0" stroke="#40e8f0" stroke-width="1.1"/><ellipse cx="0" cy="-5.6" rx="5.5" ry="2.4" fill="#e4eaf8" stroke="#40e8f0" stroke-width="1.1"/><rect x="3" y="-10" width="6" height="6" fill="#f0a030" stroke="#b06010" stroke-width=".8"/><rect x="5" y="-8" width="2.5" height="2.5" fill="#fff"/></g><g transform="translate(821 78)" ><path d="M-5.5 -5.6V5.6A5.5 2.4 0 0 0 5.5 5.6V-5.6A5.5 2.4 0 0 0 -5.5 -5.6z" fill="none" stroke="#6aa0e8" stroke-width="1.1"/><ellipse cx="0" cy="-5.6" rx="5.5" ry="2.4" fill="none" stroke="#6aa0e8" stroke-width="1.1"/><path d="M-5.5 5.6A5.5 2.4 0 0 1 5.5 5.6" fill="none" stroke="#6aa0e8" stroke-width="0.77"/><path d="M-3 -6L-1 0L-3.5 7M0 -5.5L2 1L0 8M3 -6L4.5 0L3 7M-5 0L-1 0M2 1L5.5 0" stroke="#6aa0e8" stroke-width=".6" fill="none"/></g><g transform="translate(847 78)" ><path d="M-9 -4L0 -8L9 -4L1 9z" fill="#0c1c44" stroke="#000" stroke-width=".8"/><path d="M-9 -4L0 -8L9 -4L0 -1z" fill="#4f7ed0"/><path d="M-9 -4L0 -1L1 9z" fill="#1d3a80"/></g><g transform="translate(872 78)" ><circle cx="0" cy="0" r="8.5" fill="#54c43a" stroke="#444" stroke-width=".8"/><path d="M-8.3 2C-3 5.5 4 5 8.3 2A8.5 8.5 0 0 1 -8.3 2z" fill="#d84040"/></g><g transform="translate(898 78)" ><circle cx="0" cy="0" r="8.5" fill="#54c43a" stroke="#444" stroke-width=".8"/><path d="M-8.3 2C-3 5.5 4 5 8.3 2A8.5 8.5 0 0 1 -8.3 2z" fill="#d84040"/><path d="M3 -10V5M-1.5 1.5L3 7L7.5 1.5" stroke="#1060f0" stroke-width="2.4" fill="none"/></g><g transform="translate(941 78)" ><path d="M-3.8499999999999996 1.8499999999999996L-9.9 7.9" stroke="#9a9a9a" stroke-width="2.6" stroke-linecap="round"/><circle cx="0" cy="-2" r="5.5" fill="url(#gLens)" stroke="#8a8f98" stroke-width="1.5"/><path d="M-1.5 -4.5L2.5 -2L-1.5 0.5z" fill="#b8c4d8" stroke="#7888a0" stroke-width=".5"/><path d="M1 3.0L5 1L9 3.0V7.2L5 9L1 7.2z" fill="url(#gCube)" stroke="#1a1a1a" stroke-width=".7"/><path d="M1 3.0L5 5L9 3.0M5 5V9" fill="none" stroke="#1a1a1a" stroke-width=".7"/><path d="M1 3.0L5 1L9 3.0L5 5z" fill="#e8e8e8" stroke="#1a1a1a" stroke-width=".5"/><path d="M-9 -9h4M-7 -11v4M-9 -5h4" stroke="#111" stroke-width=".9"/></g><g transform="translate(966.5 78)" ><path d="M-2.8499999999999996 2.8499999999999996L-8.9 8.9" stroke="#9a9a9a" stroke-width="2.6" stroke-linecap="round"/><circle cx="1" cy="-1" r="5.5" fill="url(#gLens)" stroke="#8a8f98" stroke-width="1.5"/><path d="M-0.5 -3.5L3.5 -1L-0.5 1.5z" fill="#b8c4d8" stroke="#7888a0" stroke-width=".5"/><path d="M1 3.0L5 1L9 3.0V7.2L5 9L1 7.2z" fill="url(#gCube)" stroke="#1a1a1a" stroke-width=".7"/><path d="M1 3.0L5 5L9 3.0M5 5V9" fill="none" stroke="#1a1a1a" stroke-width=".7"/><path d="M1 3.0L5 1L9 3.0L5 5z" fill="#e8e8e8" stroke="#1a1a1a" stroke-width=".5"/><path d="M-8.5 -4.5V-8.5H-4.5" stroke="#30c030" stroke-width="1.6" fill="none"/><rect x="-10.0" y="-10.0" width="3" height="3" fill="#30c030"/><path d="M-8.5 4.5V8.5H-4.5" stroke="#30c030" stroke-width="1.6" fill="none"/><rect x="-10.0" y="7.0" width="3" height="3" fill="#30c030"/><path d="M8.5 -4.5V-8.5H4.5" stroke="#30c030" stroke-width="1.6" fill="none"/><rect x="7.0" y="-10.0" width="3" height="3" fill="#30c030"/><path d="M8.5 4.5V8.5H4.5" stroke="#30c030" stroke-width="1.6" fill="none"/><rect x="7.0" y="7.0" width="3" height="3" fill="#30c030"/></g><g transform="translate(993 78)" ><rect x="-7" y="-5" width="14" height="10" fill="#f4f6ff" stroke="#223" stroke-width="1"/><path d="M-3.5 -2.5V3M3.5 -2.5V3" stroke="#2030a0" stroke-width="1.5"/><rect x="-.7" y="-1.5" width="1.4" height="1.4" fill="#c03020"/><rect x="-.7" y="1.2" width="1.4" height="1.4" fill="#c03020"/><path d="M-8.5 -4.5V-8.5H-4.5" stroke="#30c030" stroke-width="1.6" fill="none"/><rect x="-10.0" y="-10.0" width="3" height="3" fill="#30c030"/><path d="M-8.5 4.5V8.5H-4.5" stroke="#30c030" stroke-width="1.6" fill="none"/><rect x="-10.0" y="7.0" width="3" height="3" fill="#30c030"/><path d="M8.5 -4.5V-8.5H4.5" stroke="#30c030" stroke-width="1.6" fill="none"/><rect x="7.0" y="-10.0" width="3" height="3" fill="#30c030"/><path d="M8.5 4.5V8.5H4.5" stroke="#30c030" stroke-width="1.6" fill="none"/><rect x="7.0" y="7.0" width="3" height="3" fill="#30c030"/></g><g transform="translate(1020 78)" ><path d="M-7 7L6 -6" stroke="#2ab02a" stroke-width="2.2"/><path d="M1 -8.5L8.5 -8.5L8.5 -1" stroke="#2ab02a" stroke-width="2.2" fill="none"/><circle cx="-7" cy="7" r="2.6" fill="#d8d8d8" stroke="#666" stroke-width=".8"/></g><g transform="translate(1044.5 78)" ><g transform="rotate(90)"><g transform="translate(0 0) scale(1.08)"><path d="M-6.2 -0.6A6.2 6.2 0 0 1 3.6 -5" fill="none" stroke="#38b838" stroke-width="2.7"/><path d="M1.2 -8.6L8.2 -5.6L3.8 -0.2z" fill="#38b838"/><g transform="rotate(180)"><path d="M-6.2 -0.6A6.2 6.2 0 0 1 3.6 -5" fill="none" stroke="#38b838" stroke-width="2.7"/><path d="M1.2 -8.6L8.2 -5.6L3.8 -0.2z" fill="#38b838"/></g></g></g></g><g transform="translate(1071 78)" ><g transform="translate(0 -5) scale(0.9)"><path d="M-9.5 3C-6 -4 5.5 -5 10 0.8C6 4 -5 4.6 -9.5 3z" fill="#cfd3ea"/><ellipse cx="0.5" cy="0" rx="4.2" ry="3.5" fill="url(#gIris)"/><circle cx="-.6" cy="-1" r=".8" fill="#c8d8f4"/><path d="M-10 3C-6.5 -5.5 6 -6.5 10.5 0.8C5 -2.8 -5 -2.2 -10 3z" fill="#23283c"/><path d="M-9.5 3.4C-5 4.9 5 4.4 10 1.1" fill="none" stroke="#b493a2" stroke-width=".7"/></g><circle cx="0" cy="3.5" r="6" fill="url(#gSmile)" stroke="#b88000" stroke-width=".5"/><circle cx="-2" cy="2" r=".8" fill="#222"/><circle cx="2" cy="2" r=".8" fill="#222"/><path d="M-3 5Q0 8 3 5" stroke="#222" stroke-width=".8" fill="none"/></g><g transform="translate(1114 78)" ><g transform="translate(0 0) scale(1)"><path d="M-9 2L1 -4L10 2L0 9z" fill="#e8ecf6" stroke="#a0a8b8" stroke-width=".7"/><path d="M-3 3V-8" stroke="#1060f0" stroke-width="1.6"/><path d="M-5.5 -6L-3 -10L-.5 -6z" fill="#1060f0"/><path d="M-3 3L5 -2" stroke="#20b020" stroke-width="1.6"/><path d="M3 -3.5L7.5 -3.5L5.5 .5z" fill="#20b020"/><path d="M-3 3L5 8" stroke="#e02020" stroke-width="1.6"/><path d="M3 8.8L8 9.5L5.5 5.5z" fill="#e02020"/><circle cx="-3" cy="3" r="1.8" fill="#eee" stroke="#555" stroke-width=".6"/></g></g><g transform="translate(1140 78)" ><g transform="translate(2 -3) scale(0.7)"><path d="M-9 2L1 -4L10 2L0 9z" fill="#e8ecf6" stroke="#a0a8b8" stroke-width=".7"/><path d="M-3 3V-8" stroke="#1060f0" stroke-width="1.6"/><path d="M-5.5 -6L-3 -10L-.5 -6z" fill="#1060f0"/><path d="M-3 3L5 -2" stroke="#20b020" stroke-width="1.6"/><path d="M3 -3.5L7.5 -3.5L5.5 .5z" fill="#20b020"/><path d="M-3 3L5 8" stroke="#e02020" stroke-width="1.6"/><path d="M3 8.8L8 9.5L5.5 5.5z" fill="#e02020"/><circle cx="-3" cy="3" r="1.8" fill="#eee" stroke="#555" stroke-width=".6"/></g><path d="M-8 8L2 -1" stroke="#2ab02a" stroke-width="2.4"/><path d="M-3 -2.5L3.5 -2.5L3.5 4" stroke="#2ab02a" stroke-width="2" fill="none"/><rect x="0" y="4" width="8" height="4" fill="#e8e8e8" stroke="#777" stroke-width=".8"/></g><g transform="translate(1166 78)" ><g transform="translate(3 -3) scale(0.7)"><path d="M-9 2L1 -4L10 2L0 9z" fill="#e8ecf6" stroke="#a0a8b8" stroke-width=".7"/><path d="M-3 3V-8" stroke="#1060f0" stroke-width="1.6"/><path d="M-5.5 -6L-3 -10L-.5 -6z" fill="#1060f0"/><path d="M-3 3L5 -2" stroke="#20b020" stroke-width="1.6"/><path d="M3 -3.5L7.5 -3.5L5.5 .5z" fill="#20b020"/><path d="M-3 3L5 8" stroke="#e02020" stroke-width="1.6"/><path d="M3 8.8L8 9.5L5.5 5.5z" fill="#e02020"/><circle cx="-3" cy="3" r="1.8" fill="#eee" stroke="#555" stroke-width=".6"/></g><path d="M-8 -2L0 6M-4 -6L4 2" stroke="#2ab02a" stroke-width="2.2"/><path d="M-9 -5L-9 0L-5 -2z M2 9L2 4L-2 6z" fill="#2ab02a" stroke="#2ab02a"/></g><g transform="translate(1209 78)" ><rect x="-9" y="-9" width="18" height="18" fill="#223"/><rect x="-8.5" y="-8.5" width="5.4" height="5.4" fill="#00d0f0"/><rect x="-2.7" y="-8.5" width="5.4" height="5.4" fill="#f8e800"/><rect x="3.0999999999999996" y="-8.5" width="5.4" height="5.4" fill="#00e000"/><rect x="-8.5" y="-2.7" width="5.4" height="5.4" fill="#f08000"/><rect x="-2.7" y="-2.7" width="5.4" height="5.4" fill="#a05000"/><rect x="3.0999999999999996" y="-2.7" width="5.4" height="5.4" fill="#f000d0"/><rect x="-8.5" y="3.0999999999999996" width="5.4" height="5.4" fill="#0020e0"/><rect x="-2.7" y="3.0999999999999996" width="5.4" height="5.4" fill="#008830"/><rect x="3.0999999999999996" y="3.0999999999999996" width="5.4" height="5.4" fill="#808080"/></g><g transform="translate(1235 78)" ><rect x="-7" y="-9" width="14" height="18" fill="#eef2fa" stroke="#56689a" stroke-width="1"/><rect x="-5" y="-7" width="10" height="2" fill="#f0c040"/><rect x="-5" y="-4" width="10" height="2" fill="#e8e080"/><rect x="-5.0" y="0.0" width="3" height="3" fill="#e02020"/><rect x="-1.5" y="0.0" width="3" height="3" fill="#20c020"/><rect x="2.0" y="0.0" width="3" height="3" fill="#2040e0"/><rect x="-5.0" y="3.5" width="3" height="3" fill="#f0a000"/><rect x="-1.5" y="3.5" width="3" height="3" fill="#a020c0"/><rect x="2.0" y="3.5" width="3" height="3" fill="#20c0c0"/></g><g transform="translate(1261 78)" ><circle cx="0" cy="0" r="9" fill="#6a9a3a" stroke="#3e6420" stroke-width="1"/><path d="M-5 6L5 -4" stroke="#3a6ac0" stroke-width="2.2"/><path d="M-4 -4L6 6" stroke="#e8e8e8" stroke-width="2"/><circle cx="-5" cy="-5" r="2.3" fill="none" stroke="#e8e8e8" stroke-width="1.3"/></g><g transform="translate(1287 78)" ><rect x="-9" y="-8" width="18" height="16" fill="#dfe6f4" stroke="#3a5690" stroke-width="1"/><rect x="-9" y="-8" width="18" height="3" fill="#3a5690"/><path d="M-7 -3h14" stroke="#c09020" stroke-width="1.5" stroke-dasharray="2 1"/><path d="M-7 -2v8" stroke="#b06030" stroke-width="1.5" stroke-dasharray="2 1"/><g transform="translate(2 2) scale(.75)"><path d="M-5 6L5 -4" stroke="#4a7ed0" stroke-width="2.2"/><path d="M-4 -4L6 6" stroke="#9aa4b8" stroke-width="2"/><circle cx="-5" cy="-5" r="2.3" fill="none" stroke="#9aa4b8" stroke-width="1.3"/></g></g><g transform="translate(1313.5 78)" ><rect x="-8" y="-6" width="15" height="13" fill="none" stroke="#223" stroke-width="1.2" stroke-dasharray="1.5 1.5"/><path d="M-4 -3C0 -9 6 -9 9 -6L9 -1C5 -1 2 1 -2 2z" fill="#e8b880" stroke="#a06830" stroke-width=".7"/><circle cx="-5" cy="4" r="2.8" fill="#f0e020" stroke="#3050d0" stroke-width="1"/></g><g transform="translate(1339 78)" ><path d="M-9 7L-3 -8L9 -6L4 8z" fill="#4a74c8" stroke="#1d3a80" stroke-width="1"/><path d="M-7 2L6 3M-5 -3L7.5 -1.5M-2.5 7.5L1.5 -7.5M1.5 8L5.5 -6.8" stroke="#e05050" stroke-width=".9" fill="none"/></g></svg>
<div class="grip" style="left:13px;top:66px;height:40px"></div>
<div class="grip" style="left:263px;top:66px;height:40px"></div>
<div class="grip" style="left:592px;top:66px;height:40px"></div>
<div class="grip" style="left:921px;top:66px;height:40px"></div>
<div class="grip" style="left:1094px;top:66px;height:40px"></div>
<div class="grip" style="left:1188px;top:66px;height:40px"></div>
<div class="lbl" style="left:136px">属性/过滤器</div>
<div class="lbl" style="left:427px">图形</div>
<div class="lbl" style="left:755px">图像 (进阶)</div>
<div class="lbl" style="left:1006px">视图</div>
<div class="lbl" style="left:1140px">工作平面</div>
<div class="lbl" style="left:1275px">系统</div>
<div class="hgrip" style="left:1px;top:121px;width:57px"></div>
<div class="hgrip" style="left:1px;top:374px;width:57px"></div>
<svg class="a" style="left:0px;top:125px" width="60" height="245" viewBox="0 125 60 245"><g transform="translate(17.5 143)" ><path d="M-8 -6C-6 -8 -4 -8 -2 -7M-9 -2C-7 -4 -5 -4 -3 -3" stroke="#a8b4c8" stroke-width="1" fill="none"/><path d="M-1.8499999999999996 2.8499999999999996L-7.9 8.9" stroke="#9a9a9a" stroke-width="2.6" stroke-linecap="round"/><circle cx="2" cy="-1" r="5.5" fill="url(#gLens)" stroke="#8a8f98" stroke-width="1.5"/><path d="M0.5 -3.5L4.5 -1L0.5 1.5z" fill="#b8c4d8" stroke="#7888a0" stroke-width=".5"/></g><g transform="translate(43.5 143)" ><path d="M-8 -8L8 8" stroke="#3a78d8" stroke-width="1.4" stroke-dasharray="3 1.5"/><path d="M-3 -9L9 3" stroke="#3a78d8" stroke-width="1.2" stroke-dasharray="3 1.5"/><g transform="translate(0 0)"><path d="M6 -8L9 -5L-3 7L-7 8L-6 4z" fill="#d89838" stroke="#7a4c10" stroke-width=".6"/><path d="M6 -8L9 -5L7.5 -3.5L4.5 -6.5z" fill="#e03030"/><path d="M-6 4L-7 8L-3 7z" fill="#403020"/></g><path d="M4 -11h6l-3 3.2z" fill="#000"/></g><g transform="translate(17.5 168.7)" ><rect x="-6" y="-5" width="12" height="10" fill="url(#gDoc)" stroke="#777" stroke-width="1"/><path d="M-8 -4V-8H-4" stroke="#30c030" stroke-width="1.6" fill="none"/><rect x="-9.5" y="-9.5" width="3" height="3" fill="#30c030"/><path d="M-8 4V8H-4" stroke="#30c030" stroke-width="1.6" fill="none"/><rect x="-9.5" y="6.5" width="3" height="3" fill="#30c030"/><path d="M8 -4V-8H4" stroke="#30c030" stroke-width="1.6" fill="none"/><rect x="6.5" y="-9.5" width="3" height="3" fill="#30c030"/><path d="M8 4V8H4" stroke="#30c030" stroke-width="1.6" fill="none"/><rect x="6.5" y="6.5" width="3" height="3" fill="#30c030"/></g><g transform="translate(43.5 168.7)" ><path d="M-2 -7C-9 -9 -9 1 -2 1C6 1 7 9 -1 8" stroke="#3a78d8" stroke-width="1.4" fill="none"/><circle cx="5" cy="3" r="4" stroke="#3a78d8" stroke-width="1.3" fill="none"/><g transform="translate(0 0)"><path d="M6 -8L9 -5L-3 7L-7 8L-6 4z" fill="#d89838" stroke="#7a4c10" stroke-width=".6"/><path d="M6 -8L9 -5L7.5 -3.5L4.5 -6.5z" fill="#e03030"/><path d="M-6 4L-7 8L-3 7z" fill="#403020"/></g><path d="M4 -11h6l-3 3.2z" fill="#000"/></g><g transform="translate(17.5 195)" ><path d="M-3.8499999999999996 1.8499999999999996L-9.9 7.9" stroke="#9a9a9a" stroke-width="2.6" stroke-linecap="round"/><circle cx="0" cy="-2" r="5.5" fill="url(#gLens)" stroke="#8a8f98" stroke-width="1.5"/><path d="M-1.5 -4.5L2.5 -2L-1.5 0.5z" fill="#b8c4d8" stroke="#7888a0" stroke-width=".5"/><path d="M1 3.0L5 1L9 3.0V7.2L5 9L1 7.2z" fill="url(#gCube)" stroke="#1a1a1a" stroke-width=".7"/><path d="M1 3.0L5 5L9 3.0M5 5V9" fill="none" stroke="#1a1a1a" stroke-width=".7"/><path d="M1 3.0L5 1L9 3.0L5 5z" fill="#e8e8e8" stroke="#1a1a1a" stroke-width=".5"/><path d="M-9 -9h4M-7 -11v4M-9 -5h4" stroke="#111" stroke-width=".9"/><path d="M4 -11h6l-3 3.2z" fill="#000"/></g><g transform="translate(43.5 195)" ><path d="M-7 -7h13v6h-3v4h3v4h-13z" fill="#f4f4d8" stroke="#f0e800" stroke-width="1.6"/><path d="M-4 0L-1 5L6 -5" stroke="#30b830" stroke-width="2.6" fill="none"/><path d="M4 -11h6l-3 3.2z" fill="#000"/></g><g transform="translate(17.5 220.8)" ><g transform="translate(0 0) scale(1)"><path d="M-9 2L1 -4L10 2L0 9z" fill="#e8ecf6" stroke="#a0a8b8" stroke-width=".7"/><path d="M-3 3V-8" stroke="#1060f0" stroke-width="1.6"/><path d="M-5.5 -6L-3 -10L-.5 -6z" fill="#1060f0"/><path d="M-3 3L5 -2" stroke="#20b020" stroke-width="1.6"/><path d="M3 -3.5L7.5 -3.5L5.5 .5z" fill="#20b020"/><path d="M-3 3L5 8" stroke="#e02020" stroke-width="1.6"/><path d="M3 8.8L8 9.5L5.5 5.5z" fill="#e02020"/><circle cx="-3" cy="3" r="1.8" fill="#eee" stroke="#555" stroke-width=".6"/></g><path d="M4 -11h6l-3 3.2z" fill="#000"/></g><g transform="translate(43.5 220.8)" ><path d="M-9 2C-8 -10 -3 -10 -1 0C1 10 7 10 8 0" stroke="#3a78d8" stroke-width="1.4" fill="none"/><g transform="translate(0 0)"><path d="M6 -8L9 -5L-3 7L-7 8L-6 4z" fill="#d89838" stroke="#7a4c10" stroke-width=".6"/><path d="M6 -8L9 -5L7.5 -3.5L4.5 -6.5z" fill="#e03030"/><path d="M-6 4L-7 8L-3 7z" fill="#403020"/></g><path d="M4 -11h6l-3 3.2z" fill="#000"/></g><g transform="translate(17.5 247)" ><path d="M-8 -7h8l2 2h-10z" fill="#7d8cff"/><path d="M-8 -4.5h9l1.5 2h-10.5z" fill="#e8e8ee" stroke="#666" stroke-width=".5"/><path d="M-8 -1.5h9l1.5 2h-10.5z" fill="#f4f4f4" stroke="#666" stroke-width=".5"/><ellipse cx="1" cy="5" rx="7.5" ry="4.3" fill="#c9a58c" stroke="#7a5038" stroke-width=".7"/><circle cx="-2.5" cy="6" r="1.8" fill="#2040e0"/><circle cx="2" cy="6.5" r="1.8" fill="#18b030"/><circle cx="4.5" cy="3" r="1.8" fill="#d02020"/><path d="M8.5 -8L1 2" stroke="#b0602a" stroke-width="1.6"/><path d="M1.5 1L-1 4.5" stroke="#ddd" stroke-width="2"/><path d="M4 -11h6l-3 3.2z" fill="#000"/></g><g transform="translate(43.5 247)" ><path d="M-8 8L-3 -7L9 -9L5 6z" fill="#78b0f4" stroke="#2858c0" stroke-width="1.2"/><path d="M-5.5 0.5L7 -1.5M-1 7L3 -8" stroke="#e8f2ff" stroke-width="1.3"/><path d="M4 -11h6l-3 3.2z" fill="#000"/></g><g transform="translate(17.5 273)" ><g transform="translate(0 0) scale(1.12)"><path d="M-6.2 -0.6A6.2 6.2 0 0 1 3.6 -5" fill="none" stroke="#6c9cd8" stroke-width="2.7"/><path d="M1.2 -8.6L8.2 -5.6L3.8 -0.2z" fill="#6c9cd8"/><g transform="rotate(180)"><path d="M-6.2 -0.6A6.2 6.2 0 0 1 3.6 -5" fill="none" stroke="#6c9cd8" stroke-width="2.7"/><path d="M1.2 -8.6L8.2 -5.6L3.8 -0.2z" fill="#6c9cd8"/></g></g><path d="M4 -11h6l-3 3.2z" fill="#000"/></g><g transform="translate(43.5 273)" ><ellipse cx="2" cy="8" rx="8" ry="1.8" fill="#00000040"/><path d="M-8.5 -4.25L0 -8.5L8.5 -4.25V4.675000000000001L0 8.5L-8.5 4.675000000000001z" fill="url(#gCube)" stroke="#1a1a1a" stroke-width=".7"/><path d="M-8.5 -4.25L0 0L8.5 -4.25M0 0V8.5" fill="none" stroke="#1a1a1a" stroke-width=".7"/><path d="M-8.5 -4.25L0 -8.5L8.5 -4.25L0 0z" fill="#e8e8e8" stroke="#1a1a1a" stroke-width=".5"/><path d="M4 -11h6l-3 3.2z" fill="#000"/></g><g transform="translate(17.5 298.4)" ><ellipse cx="0" cy="8.5" rx="6" ry="1.5" fill="#00000035"/><text x="0" y="7" text-anchor="middle" font-family="Liberation Sans,sans-serif" font-weight="bold" font-size="20" fill="#4a80d0" stroke="#2a58a8" stroke-width=".4">?</text><path d="M4 -11h6l-3 3.2z" fill="#000"/></g><g transform="translate(43.5 298.4)" ><path d="M-8 -6V9M8 -6V9" stroke="#555" stroke-width="1.2"/><path d="M-7 -3H7" stroke="#e8e000" stroke-width="1.8"/><path d="M-7.5 -3L-3.5 -5.5V-.5zM7.5 -3L3.5 -5.5V-.5z" fill="#e8e000" stroke="#a09800" stroke-width=".4"/><path d="M4 -11h6l-3 3.2z" fill="#000"/></g><g transform="translate(17.5 324.5)" ><ellipse cx="1" cy="8.5" rx="7" ry="1.5" fill="#00000035"/><path d="M-7 -5h14l-2 13h-10z" fill="#a8d0f0" stroke="#4a78b0" stroke-width="1"/><ellipse cx="0" cy="-5" rx="7" ry="2" fill="#c8e0f8" stroke="#4a78b0" stroke-width="1"/><path d="M-2 -4L0 -9L2 -4z" fill="#e8e000"/><path d="M-3 0L3 5M3 0L-3 5" stroke="#d8e060" stroke-width="1.4"/><path d="M4 -11h6l-3 3.2z" fill="#000"/></g><g transform="translate(43.5 324.5)" ><g transform="translate(0 0) scale(1 1)"><ellipse cx="1" cy="8" rx="7" ry="1.5" fill="#00000030"/><path d="M-8 -2L0 -9V-5C6 -5 8 0 5 6C5 2 3 0 0 0V4z" fill="url(#gGrayArr)" stroke="#00000040" stroke-width=".5"/></g><path d="M4 -11h6l-3 3.2z" fill="#000"/></g><g transform="translate(17.5 350.8)" ><rect x="-10" y="-9" width="3.5" height="14" fill="#6a7890" stroke="#3a4860" stroke-width=".6"/><path d="M-9 3l2 4" stroke="#e8a020" stroke-width="2"/><circle cx="2" cy="-1" r="6" fill="none" stroke="#8a4828" stroke-width="1.5"/><path d="M2 -9.5V7.5M-6.5 -1H10.5M-4 -7L8 5M8 -7L-4 5" stroke="#8a4828" stroke-width="1"/><circle cx="2" cy="-1" r="1.8" fill="#f0c020"/><path d="M-8 6L2 3L9 6L-1 10z" fill="#f89020"/><path d="M-5 6.5L4 4M-3 8L6 5.5" stroke="#ffd8a0" stroke-width=".8"/><path d="M4 -11h6l-3 3.2z" fill="#000"/></g><g transform="translate(43.5 350.8)" ><path d="M-6 0h10l4 4v6h-14z" fill="#eef2fa" stroke="#111" stroke-width="1"/><g transform="translate(-1 -2) scale(0.9)"><path d="M-8 -4h5l1.5 2h7.5v9h-14z" fill="#e8c060" stroke="#c09a38" stroke-width=".6"/><path d="M-8 7L-5 -1H9L6 7z" fill="url(#gFolder)" stroke="#c8a040" stroke-width=".6"/></g><path d="M0 -8h6v4h-6z" fill="#28a838"/><rect x="-4" y="6" width="5" height="2" fill="#fff" stroke="#444" stroke-width=".5"/></g></svg>
<div id="view" class="a"></div>
<svg class="a" style="left:60px;top:109px" width="1860" height="892" viewBox="60 109 1860 892"><g shape-rendering="crispEdges">
<path d="M1198.5 495.0L1214.5 495.0L1223.9 674.6L1209.2 673.6z" fill="#a8a8a8" stroke="#0a0a0a" stroke-width="1.6" stroke-linejoin="round" /><path d="M1214.5 495.0L1221.5 495.0L1231.6 667.3L1223.9 674.6z" fill="#4c4c4c" stroke="#0a0a0a" stroke-width="1.6" stroke-linejoin="round" />
<path d="M1352.0 486.0L1408.0 476.0L1506.0 512.0L1500.0 524.0L1474.0 525.0z" fill="#a8a8a8" stroke="#0a0a0a" stroke-width="1.6" stroke-linejoin="round" />
<path d="M1382.0 481.0L1492.0 519.0" fill="none" stroke="#0a0a0a" stroke-width="1.6" />
<path d="M1452.0 472.0L1493.0 487.0L1492.0 494.5L1440.0 476.0z" fill="#9c9c9c" stroke="#0a0a0a" stroke-width="0.8" stroke-linejoin="round" />
<path d="M780.0 420.0L800.0 418.0L860.0 452.0L822.0 455.0z" fill="#a8a8a8" stroke="#0a0a0a" stroke-width="1.6" stroke-linejoin="round" />
<path d="M796.8 434.9L834.0 438.9L856.0 453.5L821.0 454.3z" fill="#9e9e9e" stroke="#0a0a0a" stroke-width="1.6" stroke-linejoin="round" />
<path d="M760.8 391.0L782.0 396.0L784.0 421.0L764.0 426.0z" fill="#9e9e9e" stroke="#0a0a0a" stroke-width="1.6" stroke-linejoin="round" />
<circle cx="764.8" cy="404" r="1.3" fill="#333"/>
<path d="M778.7 408.0L782.5 405.0L800.0 412.0L800.0 416.5L780.0 419.5z" fill="#8f8f8f" stroke="#0a0a0a" stroke-width="1.6" stroke-linejoin="round" />
<path d="M749.3 392.3L760.8 390.8L762.5 439.5L752.2 441.0z" fill="#868686" stroke="#0a0a0a" stroke-width="1.6" stroke-linejoin="round" />
<path d="M797.2 633.3L1205.4 615.5L1197.0 622.3L799.3 639.6z" fill="#ababab" stroke="#0a0a0a" stroke-width="1.6" stroke-linejoin="round" /><path d="M799.3 639.6L1197.0 622.3L1180.0 637.4L816.0 653.3z" fill="#a2a2a2" stroke="#0a0a0a" stroke-width="1.6" stroke-linejoin="round" />
<path d="M1222.2 616.6L1509.2 698.6L1509.2 707.0L1221.0 623.0z" fill="#ababab" stroke="#0a0a0a" stroke-width="1.6" stroke-linejoin="round" /><path d="M1221.0 623.0L1509.2 707.0L1474.8 712.4L1222.0 637.6z" fill="#a8a8a8" stroke="#0a0a0a" stroke-width="1.6" stroke-linejoin="round" />
<path d="M764.5 428.0L770.8 447.0L785.0 695.3L779.3 691.0z" fill="#a8a8a8" stroke="#0a0a0a" stroke-width="1.6" stroke-linejoin="round" /><path d="M770.8 447.0L787.0 459.2L800.3 692.0L785.0 695.3z" fill="#858585" stroke="#0a0a0a" stroke-width="1.6" stroke-linejoin="round" />
<path d="M1086.7 723.7L1206.4 619.7L1220.0 623.0L1088.8 736.3z" fill="#a9a9a9" stroke="#0a0a0a" stroke-width="1.6" stroke-linejoin="round" />
<path d="M1088.8 736.3L1220.0 623.0L1221.0 637.6L1102.5 738.7z" fill="#4c4c4c" stroke="#0a0a0a" stroke-width="1.6" stroke-linejoin="round" />
<path d="M799.3 641.0L902.6 727.0L903.0 740.8L782.5 643.0z" fill="#ababab" stroke="#0a0a0a" stroke-width="1.6" stroke-linejoin="round" /><path d="M782.5 643.0L903.0 740.8L904.3 758.6L783.5 659.0z" fill="#a4a4a4" stroke="#0a0a0a" stroke-width="1.6" stroke-linejoin="round" />
<path d="M925.3 741.8L1065.0 735.5L1065.3 741.4L925.7 747.0z" fill="#ababab" stroke="#0a0a0a" stroke-width="1.6" stroke-linejoin="round" /><path d="M925.7 747.0L1065.3 741.4L1066.6 756.0L927.4 762.8z" fill="#a4a4a4" stroke="#0a0a0a" stroke-width="1.6" stroke-linejoin="round" />
<path d="M1088.8 737.6L1180.2 765.0L1180.2 771.2L1081.5 744.0z" fill="#ababab" stroke="#0a0a0a" stroke-width="1.6" stroke-linejoin="round" /><path d="M1081.5 744.0L1180.2 771.2L1181.2 787.0L1082.5 758.6z" fill="#a6a6a6" stroke="#0a0a0a" stroke-width="1.6" stroke-linejoin="round" />
<path d="M1202.2 767.0L1506.9 707.0L1516.0 711.6L1202.2 773.3z" fill="#ababab" stroke="#0a0a0a" stroke-width="1.6" stroke-linejoin="round" /><path d="M1202.2 773.3L1516.0 711.6L1516.8 727.6L1203.3 789.0z" fill="#7c7c7c" stroke="#0a0a0a" stroke-width="1.6" stroke-linejoin="round" />
<path d="M892.2 545.0L898.6 547.0L912.7 803.8L906.4 799.6z" fill="#a6a6a6" stroke="#0a0a0a" stroke-width="1.6" stroke-linejoin="round" /><path d="M898.6 547.0L913.4 545.0L928.4 801.7L912.7 803.8z" fill="#7c7c7c" stroke="#0a0a0a" stroke-width="1.6" stroke-linejoin="round" />
<path d="M1054.0 538.0L1069.6 539.0L1084.0 797.0L1068.7 795.4z" fill="#a6a6a6" stroke="#0a0a0a" stroke-width="1.6" stroke-linejoin="round" /><path d="M1069.6 539.0L1077.3 565.0L1090.5 788.0L1084.0 797.0z" fill="#4c4c4c" stroke="#0a0a0a" stroke-width="1.6" stroke-linejoin="round" />
<path d="M1168.6 574.6L1176.0 581.0L1189.6 831.0L1183.3 826.9z" fill="#a6a6a6" stroke="#0a0a0a" stroke-width="1.6" stroke-linejoin="round" /><path d="M1176.0 581.0L1190.7 577.7L1205.4 828.0L1189.6 831.0z" fill="#777777" stroke="#0a0a0a" stroke-width="1.6" stroke-linejoin="round" />
<path d="M1499.3 513.9L1505.5 514.0L1519.8 766.6L1513.7 761.2z" fill="#a6a6a6" stroke="#0a0a0a" stroke-width="1.6" stroke-linejoin="round" /><path d="M1505.5 514.0L1520.0 510.4L1535.1 762.7L1519.8 766.6z" fill="#7a7a7a" stroke="#0a0a0a" stroke-width="1.6" stroke-linejoin="round" />
<path d="M753.0 352.0L800.0 345.0L840.0 362.0L905.0 449.0L880.0 455.0L760.0 372.0z" fill="#8c8c8c" stroke="#0a0a0a" stroke-width="1.6" stroke-linejoin="round" />
<path d="M746.1 348.0L765.4 344.2L784.7 340.7L804.1 337.4L823.4 334.5L842.7 331.7L862.0 329.2L881.4 327.0L900.7 325.0L920.0 323.2L939.3 321.7L958.6 320.4L978.0 319.3L997.3 318.5L1016.6 317.8L1035.9 317.5L1055.3 317.3L1074.6 317.4L1093.9 317.7L1113.2 318.3L1132.5 319.1L1151.9 320.2L1171.2 321.6L1190.5 323.2L1209.8 325.1L1229.2 327.3L1248.5 329.8L1267.8 332.7L1287.1 335.9L1306.5 339.4L1325.8 343.4L1345.1 347.8L1364.4 352.7L1383.7 358.1L1403.1 364.1L1422.4 370.8L1441.7 378.2L1461.0 386.7L1480.4 396.2L1499.7 407.3L1519.0 420.5L1500.3 419.5L1481.8 411.0L1463.3 403.3L1444.8 396.3L1426.2 389.9L1407.7 384.0L1389.2 378.6L1370.7 373.7L1352.2 369.1L1333.7 365.0L1315.2 361.1L1296.6 357.7L1278.1 354.5L1259.6 351.6L1241.1 349.0L1222.6 346.7L1204.1 344.6L1185.5 342.8L1167.0 341.2L1148.5 339.9L1130.0 338.7L1111.5 337.8L1093.0 337.1L1074.5 336.6L1055.9 336.3L1037.4 336.2L1018.9 336.3L1000.4 336.6L981.9 337.1L963.4 337.7L944.9 338.6L926.3 339.6L907.8 340.8L889.3 342.2L870.8 343.7L852.3 345.5L833.8 347.4L815.2 349.5L796.7 351.8L778.2 354.2L759.7 356.9z" fill="url(#mGuard)" stroke="#0a0a0a" stroke-width="1.6" stroke-linejoin="round" />
<path d="M759.7 356.9L778.2 354.2L796.7 351.8L815.2 349.5L833.8 347.4L852.3 345.5L870.8 343.7L889.3 342.2L907.8 340.8L926.3 339.6L944.9 338.6L963.4 337.7L981.9 337.1L1000.4 336.6L1018.9 336.3L1037.4 336.2L1055.9 336.3L1074.5 336.6L1093.0 337.1L1111.5 337.8L1130.0 338.7L1148.5 339.9L1167.0 341.2L1185.5 342.8L1204.1 344.6L1222.6 346.7L1241.1 349.0L1259.6 351.6L1278.1 354.5L1296.6 357.7L1315.2 361.1L1333.7 365.0L1352.2 369.1L1370.7 373.7L1389.2 378.6L1407.7 384.0L1426.2 389.9L1444.8 396.3L1463.3 403.3L1481.8 411.0L1500.3 419.5L1466.0 422.0L1449.2 413.2L1432.4 405.4L1415.7 398.5L1398.9 392.3L1382.1 386.7L1365.3 381.6L1348.5 377.0L1331.7 372.8L1315.0 369.0L1298.2 365.5L1281.4 362.4L1264.6 359.5L1247.8 357.0L1231.0 354.7L1214.3 352.6L1197.5 350.8L1180.7 349.2L1163.9 347.9L1147.1 346.7L1130.3 345.8L1113.6 345.1L1096.8 344.5L1080.0 344.2L1063.2 344.0L1046.4 344.1L1029.7 344.3L1012.9 344.7L996.1 345.3L979.3 346.1L962.5 347.1L945.7 348.2L929.0 349.5L912.2 351.1L895.4 352.8L878.6 354.7L861.8 356.8L845.0 359.1L828.3 361.6L811.5 364.3L794.7 367.2z" fill="#a1a1a1" stroke="#0a0a0a" stroke-width="1.6" stroke-linejoin="round" />
<path d="M746.1 347.7L753.6 351.0L753.2 375.5L748.6 377.7z" fill="#858585" stroke="#0a0a0a" stroke-width="1.6" stroke-linejoin="round" />
<path d="M1462.0 421.0L1500.3 418.8L1514.0 420.0L1520.0 423.0L1522.0 451.0L1516.0 448.5L1513.0 458.0L1522.0 466.0L1525.6 515.0L1517.5 509.5L1517.0 492.0L1492.0 494.5L1493.0 487.0L1452.0 472.0L1470.0 462.0z" fill="#a8a8a8" stroke="none" stroke-width="1.6" stroke-linejoin="round" />
<path d="M1519.0 421.5L1520.0 423.0L1522.0 451.0L1516.0 448.5L1513.0 458.0L1522.0 466.0L1525.6 515.0L1517.5 509.5L1517.0 492.0L1492.0 494.5L1493.0 487.0L1452.0 472.0" fill="none" stroke="#0a0a0a" stroke-width="1.3" />
<path d="M1513.0 458.0L1517.0 492.0" fill="none" stroke="#0a0a0a" stroke-width="1" />
<path d="M1460.0 402.5L1480.0 411.0L1500.0 421.2" fill="none" stroke="#0a0a0a" stroke-width="1.1" />
<path d="M1466.0 407.5L1472.0 416.0L1480.0 426.0L1487.0 432.0" fill="none" stroke="#0a0a0a" stroke-width="1.1" />
<path d="M1500.0 419.0L1515.0 420.6L1509.8 423.2L1503.5 422.4z" fill="#b0b0b0" stroke="#0a0a0a" stroke-width="1.1" stroke-linejoin="round" />
<circle cx="1505.8" cy="420.8" r="1" fill="#111"/>
<path d="M1510.4 423.0L1513.2 432.0L1516.7 448.0" fill="none" stroke="#0a0a0a" stroke-width="1.1" />
<path d="M1497.0 456.0L1506.0 470.0L1500.0 480.0" fill="none" stroke="#0a0a0a" stroke-width="1" />
<path d="M794.7 367.2L811.5 364.3L828.3 361.6L845.0 359.1L861.8 356.8L878.6 354.7L895.4 352.8L912.2 351.1L929.0 349.5L945.7 348.2L962.5 347.1L979.3 346.1L996.1 345.3L1012.9 344.7L1029.7 344.3L1046.4 344.1L1063.2 344.0L1080.0 344.2L1096.8 344.5L1113.6 345.1L1130.3 345.8L1147.1 346.7L1163.9 347.9L1180.7 349.2L1197.5 350.8L1214.3 352.6L1231.0 354.7L1247.8 357.0L1264.6 359.5L1281.4 362.4L1298.2 365.5L1315.0 369.0L1331.7 372.8L1348.5 377.0L1365.3 381.6L1382.1 386.7L1398.9 392.3L1415.7 398.5L1432.4 405.4L1449.2 413.2L1466.0 422.0L1188.0 482.6L1178.6 476.6L1169.2 471.3L1159.8 466.7L1150.4 462.6L1141.0 459.0L1131.6 455.8L1122.2 453.2L1112.8 450.8L1103.4 448.9L1094.0 447.2L1084.6 445.9L1075.2 444.8L1065.8 443.9L1056.4 443.2L1047.0 442.7L1037.6 442.3L1028.2 442.1L1018.8 442.0L1009.4 442.0L1000.0 442.1L990.6 442.2L981.2 442.5L971.8 442.8L962.4 443.2L953.0 443.7L943.6 444.2L934.2 444.9L924.8 445.6L915.4 446.4L906.0 447.4z" fill="url(#mBelt)" stroke="#0a0a0a" stroke-width="1.6" stroke-linejoin="round" />
<path d="M790.0 367.0L835.2 362.9L901.8 448.8L886.0 453.5z" fill="url(#mTri)" stroke="#0a0a0a" stroke-width="1.6" stroke-linejoin="round" />
<path d="M835.2 362.9L841.7 362.2L908.9 447.4L901.8 448.8z" fill="#b0b0b0" stroke="#0a0a0a" stroke-width="1.6" stroke-linejoin="round" />
<path d="M1188.0 483.5L1466.0 422.5L1488.0 431.0L1187.0 486.5z" fill="#a5a5a5" stroke="none" stroke-width="1.6" stroke-linejoin="round" />
<path d="M1188.0 483.5L1466.0 422.5" fill="none" stroke="#0a0a0a" stroke-width="1.2" />
<path d="M1260.0 470.5L1472.0 426.0" fill="none" stroke="#0a0a0a" stroke-width="1" />
<path d="M1330.0 459.0L1455.0 433.5" fill="none" stroke="#0a0a0a" stroke-width="2" />
<path d="M1195.0 474.0L1468.2 411.5" fill="none" stroke="#0a0a0a" stroke-width="0.6" stroke-dasharray="2 2"/>
<path d="M774.6 359.7L886.3 453L879.4 468L760.3 388.4C746.5 379 750.5 360 774.6 359.7z" fill="url(#mRollL)" stroke="none"/>
<path d="M760.3 388.4C746.5 379 750.5 360 774.6 359.7" fill="none" stroke="#0a0a0a" stroke-width="1.1"/>
<path d="M780 364C763.5 366 758.5 384 767 392.7" fill="none" stroke="#1a1a1a" stroke-width="1"/>
<path d="M774.6 359.7L800.0 381.0" fill="none" stroke="#0a0a0a" stroke-width="1" />
<path d="M1187 486L1487 430.8C1497 436 1499 458 1491 465.6L1182.5 503.8z" fill="url(#mRollR)" stroke="none"/>
<path d="M1487 430.8C1497 436 1499 458 1491 465.6" fill="none" stroke="#0a0a0a" stroke-width="1.1"/>
<path d="M1187.0 486.0L1487.0 430.8" fill="none" stroke="#0a0a0a" stroke-width="1.1" />
<path d="M1495 443.5L1545.7 434.8C1548 436 1548 442 1546.4 442.9L1496.3 451.5z" fill="url(#mShaft)" stroke="none"/>
<path d="M1516.7 421.2L1520.0 423.0L1521.6 451.0L1517.2 448.7z" fill="#a4a4a4" stroke="#0a0a0a" stroke-width="1.2" stroke-linejoin="round" />
<path d="M906.0 447.4L915.4 446.4L924.8 445.6L934.2 444.9L943.6 444.2L953.0 443.7L962.4 443.2L971.8 442.8L981.2 442.5L990.6 442.2L1000.0 442.1L1009.4 442.0L1018.8 442.0L1028.2 442.1L1037.6 442.3L1047.0 442.7L1056.4 443.2L1065.8 443.9L1075.2 444.8L1084.6 445.9L1094.0 447.2L1103.4 448.9L1112.8 450.8L1122.2 453.2L1131.6 455.8L1141.0 459.0L1150.4 462.6L1159.8 466.7L1169.2 471.3L1178.6 476.6L1188.0 482.6L1178.0 484.4L1168.9 479.9L1159.9 475.8L1150.8 472.0L1141.7 468.5L1132.7 465.4L1123.6 462.6L1114.5 460.1L1105.5 457.9L1096.4 456.0L1087.3 454.3L1078.3 452.8L1069.2 451.6L1060.1 450.6L1051.1 449.7L1042.0 449.1L1032.9 448.6L1023.9 448.2L1014.8 448.0L1005.7 447.9L996.7 447.9L987.6 448.0L978.5 448.2L969.5 448.4L960.4 448.7L951.3 449.0L942.3 449.3L933.2 449.6L924.1 449.9L915.1 450.2L906.0 450.4z" fill="#a9a9a9" stroke="#0a0a0a" stroke-width="1.6" stroke-linejoin="round" />
<path d="M906.0 450.4L915.1 450.2L924.1 449.9L933.2 449.6L942.3 449.3L951.3 449.0L960.4 448.7L969.5 448.4L978.5 448.2L987.6 448.0L996.7 447.9L1005.7 447.9L1014.8 448.0L1023.9 448.2L1032.9 448.6L1042.0 449.1L1051.1 449.7L1060.1 450.6L1069.2 451.6L1078.3 452.8L1087.3 454.3L1096.4 456.0L1105.5 457.9L1114.5 460.1L1123.6 462.6L1132.7 465.4L1141.7 468.5L1150.8 472.0L1159.9 475.8L1168.9 479.9L1178.0 484.4L1178 581L1170.7 575.8L1161.4 571.7L1152.2 567.9L1142.9 564.4L1133.6 561.2L1124.4 558.3L1115.1 555.7L1105.8 553.3L1096.6 551.2L1087.3 549.4L1078.0 547.8L1068.8 546.4L1059.5 545.3L1050.2 544.4L1041.0 543.7L1031.7 543.1L1022.4 542.8L1013.2 542.7L1003.9 542.7L994.6 542.9L985.4 543.3L976.1 543.8L966.8 544.5L957.6 545.2L948.3 546.1L939.0 547.1L929.8 548.3L920.5 549.5L911.2 550.8L902.0 552.2L892.7 553.6L888.5 504.7L890 450z" fill="url(#mWall)" stroke="#0a0a0a" stroke-width="1.6"/>
<path d="M888.5 504.7L901.5 503.0L904.5 551.5L892.7 553.5z" fill="#808080" stroke="#0a0a0a" stroke-width="1.6" stroke-linejoin="round" />
<ellipse cx="1057.7" cy="480" rx="2.6" ry="2.1" fill="#8a8a8a" stroke="#0a0a0a" stroke-width="1.3"/><ellipse cx="1060.7" cy="480.5" rx="1.7" ry="1.9" fill="#c4c4c4" stroke="#0a0a0a" stroke-width="1.1"/>
<ellipse cx="1060.7" cy="536.5" rx="2.6" ry="2.1" fill="#8a8a8a" stroke="#0a0a0a" stroke-width="1.3"/><ellipse cx="1063.7" cy="537.0" rx="1.7" ry="1.9" fill="#c4c4c4" stroke="#0a0a0a" stroke-width="1.1"/>
<ellipse cx="905.2" cy="543.5" rx="2.6" ry="2.1" fill="#8a8a8a" stroke="#0a0a0a" stroke-width="1.3"/><ellipse cx="908.2" cy="544.0" rx="1.7" ry="1.9" fill="#c4c4c4" stroke="#0a0a0a" stroke-width="1.1"/>
<ellipse cx="1005" cy="443.3" rx="3" ry="1.2" fill="#aaa" stroke="#111" stroke-width=".7"/>
<path d="M765.1 427.6L779.7 421.9L888.4 511.9L888.4 528.1z" fill="#ababab" stroke="#0a0a0a" stroke-width="1.6" stroke-linejoin="round" />
<path d="M765.1 427.6L888.4 528.1L889.2 544.3L766.0 441.3z" fill="#a3a3a3" stroke="#0a0a0a" stroke-width="1.6" stroke-linejoin="round" />
<path d="M913.7 551.4L940.0 547.2L1003.0 543.0L1055.0 544.2L1055.0 559.4L914.8 565.0z" fill="#a7a7a7" stroke="#0a0a0a" stroke-width="1.6" stroke-linejoin="round" />
<path d="M1070.0 546.0L1113.0 555.7L1168.6 575.6L1168.6 589.3L1071.0 562.0z" fill="#a9a9a9" stroke="#0a0a0a" stroke-width="1.6" stroke-linejoin="round" />
<path d="M1070.0 546.0L1078.0 547.8L1087.3 549.4L1096.6 551.2L1105.8 553.3L1115.1 555.7L1124.4 558.3L1133.6 561.2L1142.9 564.4L1152.2 567.9L1161.4 571.7L1170.7 575.8" fill="none" stroke="#0a0a0a" stroke-width="0.9" />
<path d="M1179.0 557.8L1513.0 491.5L1516.5 498.4L1179.0 564.0z" fill="#ababab" stroke="#0a0a0a" stroke-width="1.6" stroke-linejoin="round" /><path d="M1179.0 564.0L1516.5 498.4L1516.5 512.0L1179.0 578.8z" fill="#7c7c7c" stroke="#0a0a0a" stroke-width="1.6" stroke-linejoin="round" />
<path d="M879.0 454.0L890.6 451.0L945.6 445.7L948.6 497.6L941.8 499.1L899.8 506.0L887.0 504.0L886.8 494.5L893.0 492.0L890.0 472.0L880.5 468.0z" fill="#868686" stroke="#0a0a0a" stroke-width="1.6" stroke-linejoin="round" />
<path d="M880.0 454.0L896.0 452.5L897.0 461.0L888.0 463.0L888.0 470.0L880.5 468.0z" fill="#9a9a9a" stroke="#0a0a0a" stroke-width="1.6" stroke-linejoin="round" />
<path d="M890.6 451.0L937.2 446.5L937.2 451.0L896.7 460.2z" fill="#9c9c9c" stroke="#0a0a0a" stroke-width="1.6" stroke-linejoin="round" />
<path d="M896.7 460.2L937.2 451.0L941.0 497.6L899.8 505.2z" fill="#868686" stroke="#0a0a0a" stroke-width="1.6" stroke-linejoin="round" />
<path d="M939.5 448.0L946.3 446.5L948.6 497.6L941.8 499.1z" fill="#8e8e8e" stroke="#0a0a0a" stroke-width="1.6" stroke-linejoin="round" />
<path d="M891.0 470.0L897.0 462.0L899.5 490.0L893.0 492.0z" fill="#b4b4b4" stroke="#0a0a0a" stroke-width="1.6" stroke-linejoin="round" />
<path d="M886.8 494.5L897.0 493.0L900.5 506.0L887.0 504.0z" fill="#9a9a9a" stroke="#0a0a0a" stroke-width="1.6" stroke-linejoin="round" />
<ellipse cx="909.7" cy="479.3" rx="10.3" ry="10.6" fill="none" stroke="#0a0a0a" stroke-width="1.1"/>
<ellipse cx="909.7" cy="479.3" rx="8.2" ry="8.4" fill="none" stroke="#0a0a0a" stroke-width="1.1"/>
<ellipse cx="909.7" cy="479.3" rx="6" ry="6.2" fill="none" stroke="#0a0a0a" stroke-width="0.8"/>
<ellipse cx="909.7" cy="479.3" rx="3.4" ry="3.5" fill="#848484" stroke="#0a0a0a" stroke-width="0.8"/>
<path d="M926.5 470.5L935.6 469.5L936.0 481.5L927.0 482.8z" fill="#9a9a9a" stroke="#0a0a0a" stroke-width="1.6" stroke-linejoin="round" />
<path d="M929.0 472.0L929.5 479.0L933.0 480.0" fill="none" stroke="#0a0a0a" stroke-width="0.8" />
<path d="M920.0 461.5L936.0 459.0L936.5 488.5L921.0 491.5L920.0 489.0" fill="none" stroke="#0a0a0a" stroke-width="0.8" />
<path d="M947.9 478.3L953.0 478.0L953.0 481.0L947.9 481.2z" fill="#b0b0b0" stroke="#0a0a0a" stroke-width="0.6" stroke-linejoin="round" />
<path d="M952.5 477.5L956.0 477.5L956.0 481.5L952.5 481.5z" fill="#111" stroke="#0a0a0a" stroke-width="0.4" stroke-linejoin="round" />
<circle cx="897" cy="457.5" r="1.6" fill="#c8c8c8" stroke="#111" stroke-width=".7"/>
<circle cx="921" cy="453.5" r="1.6" fill="#c8c8c8" stroke="#111" stroke-width=".7"/>
<circle cx="899" cy="501" r="1.6" fill="#c8c8c8" stroke="#111" stroke-width=".7"/>
<circle cx="922" cy="497" r="1.6" fill="#c8c8c8" stroke="#111" stroke-width=".7"/>
<path d="M1137.9 465.8L1146.0 464.8L1187.3 484.4L1187.3 501.6L1176.0 505.0L1175.0 521.6L1163.0 532.3L1138.6 516.6z" fill="#a8a8a8" stroke="#0a0a0a" stroke-width="1.6" stroke-linejoin="round" />
<path d="M1146.0 464.8L1147.5 521.5" fill="none" stroke="#0a0a0a" stroke-width="1" />
<path d="M1141.0 469.5L1141.8 514.0" fill="none" stroke="#0a0a0a" stroke-width="1" />
<path d="M1146.5 470.0L1160.0 476.5L1182.0 486.5L1182.0 502.0" fill="none" stroke="#0a0a0a" stroke-width="1" />
<path d="M1141.5 478.6L1145.0 480.0L1145.0 484.5L1141.5 483.0z" fill="#8a8a8a" stroke="#0a0a0a" stroke-width="1" stroke-linejoin="round" />
<path d="M1139.3 490.8L1143.0 489.5L1143.3 499.0L1139.6 500.0z" fill="#8a8a8a" stroke="#0a0a0a" stroke-width="1" stroke-linejoin="round" />
<ellipse cx="1150.8" cy="500.8" rx="4.4" ry="8.2" fill="#a0a0a0" stroke="#0a0a0a" stroke-width="1.5" transform="rotate(-8 1150.8 500.8)"/>
<ellipse cx="1151.2" cy="501" rx="2.4" ry="5" fill="#8c8c8c" stroke="#0a0a0a" stroke-width="1.1" transform="rotate(-8 1151.2 501)"/>
<path d="M1158.0 480.0L1173.0 478.5L1173.0 488.0L1167.0 490.0L1166.0 486.0L1158.0 488.0z" fill="#808080" stroke="#0a0a0a" stroke-width="1.1" stroke-linejoin="round" />
<path d="M1156.0 497.0L1170.0 493.5L1170.0 511.0L1156.0 512.5z" fill="url(#mBlk)" stroke="#0a0a0a" stroke-width="1.1" stroke-linejoin="round" />
<path d="M1156.5 514.0L1169.4 511.5L1170.0 520.0L1157.0 522.5z" fill="#808080" stroke="#0a0a0a" stroke-width="1.1" stroke-linejoin="round" />
<path d="M1161.5 522.5L1173.0 520.0L1173.0 528.5L1163.0 531.5z" fill="#868686" stroke="#0a0a0a" stroke-width="1.1" stroke-linejoin="round" />
<ellipse cx="1177.3" cy="495" rx="3" ry="6.6" fill="#a4a4a4" stroke="#0a0a0a" stroke-width="1.2" transform="rotate(-8 1177.3 495)"/>
<path d="M1173.0 488.0L1176.0 487.0L1182.0 488.0" fill="none" stroke="#0a0a0a" stroke-width="1" />
<path d="M1168.7 530.5L1175.0 521.6L1179.4 581.0L1172.3 576.0z" fill="#a2a2a2" stroke="#0a0a0a" stroke-width="1.6" stroke-linejoin="round" />
<circle cx="1170.5" cy="568.5" r="1.2" fill="#222"/>
<path d="M975.0 324.0L987.0 323.4L987.0 332.0L975.0 332.6z" fill="#a4a4a4" stroke="#0a0a0a" stroke-width="1" stroke-linejoin="round" /><path d="M975.0 319.5L987.0 318.9L987.0 323.4L975.0 324.0z" fill="#b2b2b2" stroke="#0a0a0a" stroke-width="1" stroke-linejoin="round" /><path d="M979.5 320.8h3l-1.5 1.8z" fill="#222"/>
<path d="M1194.5 329.5L1206.5 328.9L1206.5 337.5L1194.5 338.1z" fill="#a4a4a4" stroke="#0a0a0a" stroke-width="1" stroke-linejoin="round" /><path d="M1194.5 325.0L1206.5 324.4L1206.5 328.9L1194.5 329.5z" fill="#b2b2b2" stroke="#0a0a0a" stroke-width="1" stroke-linejoin="round" /><path d="M1199.0 326.3h3l-1.5 1.8z" fill="#222"/>
<path d="M1380.0 363.5L1392.0 362.9L1392.0 371.5L1380.0 372.1z" fill="#a4a4a4" stroke="#0a0a0a" stroke-width="1" stroke-linejoin="round" /><path d="M1380.0 359.0L1392.0 358.4L1392.0 362.9L1380.0 363.5z" fill="#b2b2b2" stroke="#0a0a0a" stroke-width="1" stroke-linejoin="round" /><path d="M1384.5 360.3h3l-1.5 1.8z" fill="#222"/>
<path d="M901.0 348.0L915.0 347.4L915.0 353.0L901.0 353.6z" fill="#a4a4a4" stroke="#0a0a0a" stroke-width="1" stroke-linejoin="round" /><path d="M901.0 343.5L915.0 342.9L915.0 347.4L901.0 348.0z" fill="#b2b2b2" stroke="#0a0a0a" stroke-width="1" stroke-linejoin="round" /><path d="M906.5 344.8h3l-1.5 1.8z" fill="#222"/>
<path d="M1205.0 347.5L1219.0 346.9L1219.0 352.5L1205.0 353.1z" fill="#a4a4a4" stroke="#0a0a0a" stroke-width="1" stroke-linejoin="round" /><path d="M1205.0 343.0L1219.0 342.4L1219.0 346.9L1205.0 347.5z" fill="#b2b2b2" stroke="#0a0a0a" stroke-width="1" stroke-linejoin="round" /><path d="M1210.5 344.3h3l-1.5 1.8z" fill="#222"/>
<path d="M754.0 347.5L765.0 346.0L766.0 351.5L755.0 353.0z" fill="#b0b0b0" stroke="#0a0a0a" stroke-width="1" stroke-linejoin="round" />
<path d="M755.0 353.0L766.0 351.5L766.0 357.0L756.0 358.0z" fill="#9a9a9a" stroke="#0a0a0a" stroke-width="1" stroke-linejoin="round" />
<path d="M1435.0 393.0L1441.5 396.0L1441.5 406.5L1435.0 403.5z" fill="#a8a8a8" stroke="#0a0a0a" stroke-width="1.2" stroke-linejoin="round" />
<path d="M830.0 376.0L838.0 375.5L842.0 379.0L834.0 380.0z" fill="#8a8a8a" stroke="#0a0a0a" stroke-width="0.7" stroke-linejoin="round" />
</g>
<path d="M986.3 731L985 692" stroke="#12a82a" stroke-width="2.4"/><path d="M981 694L984.6 684.5L988.6 694z" fill="#14c030"/>
<path d="M985 731.5L921 734.8" stroke="#14b4c0" stroke-width="2.2"/><path d="M923 731.5L911 735.5L923 738.5z" fill="#2cc8d0"/>
<circle cx="986.3" cy="731.8" r="3.2" fill="#8e8e98"/><circle cx="986" cy="740" r="3" fill="#e01818"/>
<path d="M986.2 722V736" stroke="#e8e8e8" stroke-width=".7"/>
<text x="983.5" y="683" font-family="Liberation Sans,sans-serif" font-size="11" fill="#d8d8d8" text-anchor="middle">Y</text>
<text x="903.6" y="740" font-family="Liberation Sans,sans-serif" font-size="12" fill="#f01010" text-anchor="middle">Z</text>
<text x="986" y="752.5" font-family="Liberation Sans,sans-serif" font-size="10" fill="#c8c8c8" text-anchor="middle">X</text>
<rect x="93.5" y="918.8" width="25" height="33" fill="#8a93ab" fill-opacity=".45" stroke="#d8dce6" stroke-width=".8"/>
<path d="M60 944.5L117 941.7" stroke="#18d8e8" stroke-width="3"/>
<path d="M118.4 941L117.8 903" stroke="#10c818" stroke-width="2.8"/><path d="M113.4 906L117.4 895.5L121.8 906z" fill="#18e020"/>
<path d="M118.5 919L119 947" stroke="#f0e020" stroke-width="1.6"/>
<circle cx="120.3" cy="941.6" r="3" fill="#8e8e98"/><path d="M119 945.5L123 950.2L119 955L115 950.2z" fill="#f01010"/>
<text x="115.5" y="892" font-family="Liberation Sans,sans-serif" font-size="11" fill="#d8d8d8" text-anchor="middle">Y</text>
<text x="119" y="962" font-family="Liberation Sans,sans-serif" font-size="10" fill="#c8c8c8" text-anchor="middle">X</text></svg>
<div class="vb" style="left:64px;top:113px"></div>
<div class="vb" style="left:92px;top:113px"></div>
<div class="vb" style="left:120px;top:113px"></div>
<div class="vb" style="left:148px;top:113px"></div>
<div class="vb" style="left:176px;top:113px"></div>
<div class="vb" style="left:204px;top:113px"></div>
<div class="vb" style="left:232px;top:113px"></div>
<div class="vb" style="left:260px;top:113px"></div>
<div class="vb" style="left:288px;top:113px"></div>
<div class="vb" style="left:316px;top:113px"></div>
<div class="vb" style="left:344px;top:113px"></div>
<div class="vb" style="left:64px;top:141px"></div>
<div class="vb" style="left:64px;top:169px"></div>
<div class="vb sel" style="left:64px;top:197px"></div>
<div class="vb" style="left:64px;top:225px"></div>
<div class="vb" style="left:64px;top:253px"></div>
<svg class="a" style="left:60px;top:109px" width="320" height="175" viewBox="60 109 320 175"><g transform="translate(76 125)" ><rect x="-9" y="-8" width="18" height="3.6" rx="1" fill="#3a4f80" stroke="#5a6ea0" stroke-width=".5"/><rect x="-9" y="-1.8" width="18" height="3.6" rx="1" fill="#3a4f80" stroke="#5a6ea0" stroke-width=".5"/><rect x="-9" y="4.4" width="18" height="3.6" rx="1" fill="#3a4f80" stroke="#5a6ea0" stroke-width=".5"/></g><g transform="translate(104 125)" ><rect x="-6" y="-5.5" width="12" height="11" fill="url(#gDoc)" stroke="#99a" stroke-width=".8"/><path d="M-8 -4V-8H-4" stroke="#30c030" stroke-width="1.6" fill="none"/><rect x="-9.5" y="-9.5" width="3" height="3" fill="#30c030"/><path d="M-8 4V8H-4" stroke="#30c030" stroke-width="1.6" fill="none"/><rect x="-9.5" y="6.5" width="3" height="3" fill="#30c030"/><path d="M8 -4V-8H4" stroke="#30c030" stroke-width="1.6" fill="none"/><rect x="6.5" y="-9.5" width="3" height="3" fill="#30c030"/><path d="M8 4V8H4" stroke="#30c030" stroke-width="1.6" fill="none"/><rect x="6.5" y="6.5" width="3" height="3" fill="#30c030"/></g><g transform="translate(132 125)" ><path d="M-8 -7C-5 -9 -3 -9 0 -8M-9 -3C-7 -5 -5 -5 -3 -4M-8 1C-6 -1 -5 -1 -3 0" stroke="#c4cee0" stroke-width="1.1" fill="none"/><path d="M-1.3499999999999996 3.8499999999999996L-7.4 9.9" stroke="#9a9a9a" stroke-width="2.6" stroke-linecap="round"/><circle cx="2.5" cy="0" r="5.5" fill="url(#gLens)" stroke="#8a8f98" stroke-width="1.5"/><path d="M1.0 -2.5L5.0 0L1.0 2.5z" fill="#b8c4d8" stroke="#7888a0" stroke-width=".5"/></g><g transform="translate(160 125)" ><path d="M-9 3L0 -3L10 3L1 9z" fill="none" stroke="#555c70" stroke-width=".7"/><path d="M-1 3V-8" stroke="#1060f0" stroke-width="1.8"/><path d="M-3.5 -6L-1 -10.5L1.5 -6z" fill="#1060f0"/><path d="M-1 3L7 -2" stroke="#20b020" stroke-width="1.6"/><path d="M5 -4L9.5 -3.5L7 .5z" fill="#20b020"/><path d="M-1 3L7 8" stroke="#e02020" stroke-width="1.6"/><path d="M5 9L10 10L7.5 5.5z" fill="#e02020"/><circle cx="-1" cy="3" r="1.8" fill="#eee" stroke="#555" stroke-width=".6"/></g><g transform="translate(188 125)" ><path d="M-8.6 -5L0.6 -8.6L9.6 -5L9.6 4.4L0.6 9.4L-8.6 4.4zM-8.6 -5L0.6 -1.4L9.6 -5M0.6 -1.4L0.6 9.4M0.6 -8.6L0.6 2.3L-8.6 4.4M0.6 2.3L9.6 4.4" fill="none" stroke="#080808" stroke-width="1.25" stroke-linejoin="round"/><path d="M-8.6 -5L0.6 -8.6L9.6 -5L0.6 -1.4z" fill="url(#gGreenFace)" stroke="#1c8a10" stroke-width=".8" stroke-linejoin="round"/></g><g transform="translate(216 125)" ><path d="M-8.6 -5L0.6 -8.6L9.6 -5L9.6 4.4L0.6 9.4L-8.6 4.4zM-8.6 -5L0.6 -1.4L9.6 -5M0.6 -1.4L0.6 9.4M0.6 -8.6L0.6 2.3L-8.6 4.4M0.6 2.3L9.6 4.4" fill="none" stroke="#080808" stroke-width="1.25" stroke-linejoin="round"/><path d="M-8.6 4.4L0.6 2.3L9.6 4.4L0.6 9.4z" fill="url(#gGreenFace)" stroke="#1c8a10" stroke-width=".8" stroke-linejoin="round"/></g><g transform="translate(244 125)" ><path d="M-8.6 -5L0.6 -8.6L9.6 -5L9.6 4.4L0.6 9.4L-8.6 4.4zM-8.6 -5L0.6 -1.4L9.6 -5M0.6 -1.4L0.6 9.4M0.6 -8.6L0.6 2.3L-8.6 4.4M0.6 2.3L9.6 4.4" fill="none" stroke="#080808" stroke-width="1.25" stroke-linejoin="round"/><path d="M-8.6 -5L0.6 -8.6L0.6 2.3L-8.6 4.4z" fill="url(#gGreenFace)" stroke="#1c8a10" stroke-width=".8" stroke-linejoin="round"/></g><g transform="translate(272 125)" ><path d="M-8.6 -5L0.6 -8.6L9.6 -5L9.6 4.4L0.6 9.4L-8.6 4.4zM-8.6 -5L0.6 -1.4L9.6 -5M0.6 -1.4L0.6 9.4M0.6 -8.6L0.6 2.3L-8.6 4.4M0.6 2.3L9.6 4.4" fill="none" stroke="#080808" stroke-width="1.25" stroke-linejoin="round"/><path d="M0.6 -1.4L9.6 -5L9.6 4.4L0.6 9.4z" fill="url(#gGreenFace)" stroke="#1c8a10" stroke-width=".8" stroke-linejoin="round"/></g><g transform="translate(300 125)" ><path d="M-8.6 -5L0.6 -8.6L9.6 -5L9.6 4.4L0.6 9.4L-8.6 4.4zM-8.6 -5L0.6 -1.4L9.6 -5M0.6 -1.4L0.6 9.4M0.6 -8.6L0.6 2.3L-8.6 4.4M0.6 2.3L9.6 4.4" fill="none" stroke="#080808" stroke-width="1.25" stroke-linejoin="round"/><path d="M-8.6 -5L0.6 -1.4L0.6 9.4L-8.6 4.4z" fill="url(#gGreenFace)" stroke="#1c8a10" stroke-width=".8" stroke-linejoin="round"/></g><g transform="translate(328 125)" ><path d="M-8.6 -5L0.6 -8.6L9.6 -5L9.6 4.4L0.6 9.4L-8.6 4.4zM-8.6 -5L0.6 -1.4L9.6 -5M0.6 -1.4L0.6 9.4M0.6 -8.6L0.6 2.3L-8.6 4.4M0.6 2.3L9.6 4.4" fill="none" stroke="#080808" stroke-width="1.25" stroke-linejoin="round"/><path d="M0.6 -8.6L9.6 -5L9.6 4.4L0.6 2.3z" fill="url(#gGreenFace)" stroke="#1c8a10" stroke-width=".8" stroke-linejoin="round"/></g><g transform="translate(356 125)" ><path d="M-8.6 -5L0.6 -8.6L9.6 -5L0.6 -1.4z" fill="#62e636"/><path d="M-8.6 -5L0.6 -1.4L0.6 9.4L-8.6 4.4z" fill="#3ccc20"/><path d="M0.6 -1.4L9.6 -5L9.6 4.4L0.6 9.4z" fill="#2aa514"/><path d="M-8.6 -5L0.6 -8.6L9.6 -5L9.6 4.4L0.6 9.4L-8.6 4.4zM-8.6 -5L0.6 -1.4L9.6 -5M0.6 -1.4L0.6 9.4" fill="none" stroke="#1f8a10" stroke-width=".9"/></g><g transform="translate(76 153)" ><g transform="scale(.9)"><path d="M-5.0 -5.1V5.1A5.0 2.4 0 0 0 5.0 5.1V-5.1A5.0 2.4 0 0 0 -5.0 -5.1z" fill="none" stroke="#222" stroke-width="1.1"/><ellipse cx="0" cy="-5.1" rx="5.0" ry="2.4" fill="none" stroke="#222" stroke-width="1.1"/><path d="M-5.0 5.1A5.0 2.4 0 0 1 5.0 5.1" fill="none" stroke="#222" stroke-width="0.77"/></g></g><g transform="translate(76 181)" ><g transform="scale(.9)"><path d="M-5.0 -5.1V5.1A5.0 2.4 0 0 0 5.0 5.1V-5.1A5.0 2.4 0 0 0 -5.0 -5.1z" fill="none" stroke="#222" stroke-width="1.1"/><ellipse cx="0" cy="-5.1" rx="5.0" ry="2.4" fill="none" stroke="#222" stroke-width="1.1"/></g></g><g transform="translate(76 209)" ><g transform="scale(.9)"><path d="M-5.0 -5.1V5.1A5.0 2.4 0 0 0 5.0 5.1V-5.1A5.0 2.4 0 0 0 -5.0 -5.1z" fill="url(#gBlueCyl)" stroke="#0a1430" stroke-width="1.1"/><ellipse cx="0" cy="-5.1" rx="5.0" ry="2.4" fill="#7fa4e4" stroke="#0a1430" stroke-width="1.1"/></g></g><g transform="translate(76 237)" ><g transform="scale(.9)"><path d="M-5.0 -5.1V5.1A5.0 2.4 0 0 0 5.0 5.1V-5.1A5.0 2.4 0 0 0 -5.0 -5.1z" fill="url(#gPaleCyl)" stroke="#333" stroke-width="1.1"/><ellipse cx="0" cy="-5.1" rx="5.0" ry="2.4" fill="#eef2fa" stroke="#333" stroke-width="1.1"/></g></g><g transform="translate(76 265)" ><g transform="scale(.9)"><path d="M-5.5 -5.6V5.6A5.5 2.4 0 0 0 5.5 5.6V-5.6A5.5 2.4 0 0 0 -5.5 -5.6z" fill="none" stroke="#222" stroke-width="1.1"/><ellipse cx="0" cy="-5.6" rx="5.5" ry="2.4" fill="none" stroke="#222" stroke-width="1.1"/><path d="M-5.5 5.6A5.5 2.4 0 0 1 5.5 5.6" fill="none" stroke="#222" stroke-width="0.77"/><path d="M-3 -6L-1 0L-3.5 7M0 -5.5L2 1L0 8M3 -6L4.5 0L3 7M-5 0L-1 0M2 1L5.5 0" stroke="#222" stroke-width=".6" fill="none"/></g></g></svg>
<div class="a" style="left:0;top:1001px;width:1920px;height:39px;background:#d6dbe9"></div>
<div class="a" style="left:4px;top:1020px;width:1916px;height:1px;background:#9ea3ae"></div>
<div class="grip" style="left:1337px;top:1004px;height:15px;width:4px;background:repeating-linear-gradient(180deg,#aab0c0 0,#aab0c0 1px,#eef0f6 1px,#eef0f6 2px)"></div>
<div class="a" style="left:1341px;top:1003px;width:131px;height:16px;background:#fff"></div>
<svg class="a" style="left:1458px;top:1004px" width="14" height="14" viewBox="0 0 14 14"><circle cx="8.5" cy="5.5" r="3.2" fill="none" stroke="#3a5a9a" stroke-width="1.2"/><path d="M6 8L2.5 11.5" stroke="#3a5a9a" stroke-width="1.6"/></svg>
<div class="t" style="left:1486px;top:1005px">绝对 XY 上视图</div>
<div class="sep" style="left:1592px;top:1004px;height:14px"></div>
<div class="t" style="left:1601px;top:1005px">绝对视图</div>
<div class="grip" style="left:1658px;top:1004px;height:15px;width:4px;background:repeating-linear-gradient(180deg,#aab0c0 0,#aab0c0 1px,#eef0f6 1px,#eef0f6 2px)"></div>
<div class="t" style="left:1668px;top:1005px;font-weight:bold">LAYER0</div>
<div class="sep" style="left:1726px;top:1004px;height:14px"></div>
<div class="sep" style="left:1132px;top:1023px;height:15px"></div>
<div class="sep" style="left:1175px;top:1023px;height:15px"></div>
<div class="sep" style="left:1206px;top:1023px;height:15px"></div>
<div class="sep" style="left:1237px;top:1023px;height:15px"></div>
<div class="sep" style="left:1268px;top:1023px;height:15px"></div>
<div class="sep" style="left:1299px;top:1023px;height:15px"></div>
<div class="sep" style="left:1330px;top:1023px;height:15px"></div>
<div class="sep" style="left:1361px;top:1023px;height:15px"></div>
<div class="sep" style="left:1392px;top:1023px;height:15px"></div>
<div class="sep" style="left:1423px;top:1023px;height:15px"></div>
<div class="sep" style="left:1454px;top:1023px;height:15px"></div>
<div class="sep" style="left:1579px;top:1023px;height:15px"></div>
<div class="sep" style="left:1653px;top:1023px;height:15px"></div>
<div class="t" style="left:1141px;top:1025px">拴牢</div>
<div class="a" style="left:1212px;top:1021px;width:18px;height:18px;background:#fbd868"></div>
<div class="a" style="left:1336px;top:1021px;width:18px;height:18px;background:#fbd868"></div>
<svg class="a" style="left:1180px;top:1021px" width="275" height="19" viewBox="1180 1021 275 19"><g transform="translate(1191 1030)" ><g transform="scale(.85)"><rect x="-8" y="-8" width="16" height="16" fill="#c8ccd8" stroke="#6a7088" stroke-width="1.2"/><g transform="translate(0 0) scale(0.95)"><path d="M-6.2 -0.6A6.2 6.2 0 0 1 3.6 -5" fill="none" stroke="#e05060" stroke-width="2.7"/><path d="M1.2 -8.6L8.2 -5.6L3.8 -0.2z" fill="#e05060"/><g transform="rotate(180)"><path d="M-6.2 -0.6A6.2 6.2 0 0 1 3.6 -5" fill="none" stroke="#e05060" stroke-width="2.7"/><path d="M1.2 -8.6L8.2 -5.6L3.8 -0.2z" fill="#e05060"/></g></g></g></g><g transform="translate(1221.5 1030)" ><g transform="scale(.85)"><path d="M-7 -7L-2 -5L1 -9L2 -4L7 -3L3 0L4 5L-1 2L-6 5L-4 0z" fill="#e070c0" stroke="#f0c020" stroke-width=".8"/><path d="M-2 -2L7 7L4 7.5L5.5 10L3.5 10L2.5 7.5L0 9z" fill="#e8e0d0" stroke="#777" stroke-width=".7"/></g></g><g transform="translate(1253 1030)" ><g transform="scale(.85)"><path d="M-7 -2L0 -8L8 -5L2 1z" fill="#e8a860" stroke="#a06020" stroke-width=".7"/><path d="M-5 0h9v8h-9z" fill="#dfe8f8" stroke="#5070b0" stroke-width=".8"/><text x="-.5" y="7" text-anchor="middle" font-family="Liberation Sans,sans-serif" font-weight="bold" font-size="7" fill="#3060c0">io</text></g></g><g transform="translate(1284 1030)" ><g transform="scale(.85)"><ellipse cx="0" cy="8" rx="6" ry="1.4" fill="#00000035"/><text x="0" y="7" text-anchor="middle" font-family="Liberation Sans,sans-serif" font-weight="bold" font-size="19" fill="#4a80d0" stroke="#2a58a8" stroke-width=".4">?</text></g></g><g transform="translate(1315 1030)" ><g transform="scale(.85)"><path d="M-6.2 -6.1L-2 -8.2L2.2 -6.1V-1.6899999999999995L-2 0.20000000000000018L-6.2 -1.6899999999999995z" fill="#58a0f0" stroke="#1c4c98" stroke-width=".7"/><path d="M-6.2 -6.1L-2 -4L2.2 -6.1M-2 -4V0.20000000000000018" fill="none" stroke="#1c4c98" stroke-width=".7"/><path d="M-6.2 -6.1L-2 -8.2L2.2 -6.1L-2 -4z" fill="#e8e8e8" stroke="#1c4c98" stroke-width=".5"/><path d="M-0.5 1.75L4 -0.5L8.5 1.75V6.475L4 8.5L-0.5 6.475z" fill="#5a8088" stroke="#1c2c30" stroke-width=".7"/><path d="M-0.5 1.75L4 4L8.5 1.75M4 4V8.5" fill="none" stroke="#1c2c30" stroke-width=".7"/><path d="M-0.5 1.75L4 -0.5L8.5 1.75L4 4z" fill="#e8e8e8" stroke="#1c2c30" stroke-width=".5"/><path d="M-9 3h7M-8 0l6 3-6 3" stroke="#e01020" stroke-width="1.5" fill="none"/></g></g><g transform="translate(1345.5 1030)" ><g transform="scale(.85)"><path d="M-7 -4L0 -8L7 -4L0 0z" fill="#e040e0" stroke="#802080" stroke-width=".6"/><path d="M-7 -4L0 0V9L-7 5z" fill="#98a8a0" stroke="#1c50c0" stroke-width="1"/><path d="M7 -4L0 0V9L7 5z" fill="#7c9088" stroke="#1c50c0" stroke-width="1"/></g></g><g transform="translate(1377 1030)" ><g transform="scale(.85)"><rect x="-5" y="-8" width="10" height="16" fill="#e8e8d8" stroke="#687868" stroke-width="1.2"/><path d="M-5 -3h10M-5 2h10" stroke="#687868" stroke-width="1"/><rect x="-4.4" y="-2.4" width="8.8" height="3.8" fill="#f0a840"/></g></g><g transform="translate(1408 1030)" ><g transform="scale(.85)"><path d="M-3 -6A7.5 7.5 0 1 0 5 -4" fill="none" stroke="#188828" stroke-width="2"/><path d="M-5 -9.5L1 -6.5L-4 -2z" fill="#188828"/><path d="M-2.5 2h5M0 -.5v5" stroke="#2030a0" stroke-width="1.2"/></g></g><g transform="translate(1439 1030)" ><g transform="scale(.85)"><rect x="-8" y="-8" width="16" height="16" fill="#e4e8f2" stroke="#505868" stroke-width="1.4"/><path d="M0 -8V8M-8 0H8" stroke="#283058" stroke-width="1.6"/></g></g></svg>
<div class="t" style="left:1463px;top:1025px">LS: 1.00 PS: 1.00</div>
<div class="t" style="left:1589px;top:1025px">单位: 毫米</div>
<div class="t" style="left:1662px;top:1025px;color:#f01010;letter-spacing:-.2px">X =-9246.827 Y =-2400.000 Z = 20.000</div>
<div id="task" class="a"></div>
<div class="a" style="left:1815px;top:1045px;font-size:12px;color:#fff;line-height:12px">11:04</div><div class="a" style="left:1915px;top:1040px;width:1px;height:8px;background:#8a8680"></div><div class="a" style="left:510px;top:1040px;width:48px;height:8px;background:#6b675d"></div>
<svg class="a" style="left:1725px;top:955px" width="195" height="93" viewBox="1725 955 195 93"><defs><linearGradient id="imeGlow" x1="0" x2="0" y1="0" y2="1"><stop offset="0" stop-color="#bfdcf0"/><stop offset=".06" stop-color="#1f86c8"/><stop offset=".16" stop-color="#8ec4e8"/><stop offset=".3" stop-color="#c4e0f2"/><stop offset=".85" stop-color="#c4e0f2"/><stop offset=".93" stop-color="#2a8ccc"/><stop offset="1" stop-color="#9ccaea"/></linearGradient></defs><rect x="1752" y="965" width="155.5" height="70" rx="9" fill="url(#imeGlow)" opacity=".95"/><rect x="1735" y="970.5" width="170.5" height="60" rx="8.5" fill="#fff" stroke="#1a86cc" stroke-width="1.3"/><text x="1756.5" y="997.5" text-anchor="middle" font-family="Liberation Sans,Noto Sans CJK SC,sans-serif" font-weight="bold" font-size="20" fill="#000">中</text><path d="M1784 982.5A9.2 9.2 0 1 1 1778.5 996.2A7.4 7.4 0 0 0 1784 982.5z" fill="#000"/><path d="M1750.5 1008l1.2 .3-1.8 4.2-.8-.3z" fill="#000"/><circle cx="1760.6" cy="1021.2" r="2" fill="none" stroke="#000" stroke-width="1.1"/><path d="M1781 1009h9.5l5 2.5v6.5h-4.2v6h-11.2v-6h-4.1v-6.5z" fill="#000"/><circle cx="1897.6" cy="993.5" r="4.9" fill="#e60026"/><path d="M1870 1000C1880 992 1895 994 1901 1006C1906 1016 1902 1030 1890 1034C1875 1040 1850 1041 1843 1036C1838 1030 1845 1020 1860 1015z" fill="#0a9de6" stroke="#0b6ea8" stroke-width=".6"/><path d="M1903 1012C1912 1010 1920 1016 1922 1024C1922 1032 1912 1036 1902 1034C1896 1032 1898 1015 1903 1012z" fill="#fff" stroke="#999" stroke-width=".6"/><path d="M1868 1032C1880 1036 1900 1034 1906 1030L1904 1034C1890 1038 1876 1037 1868 1034z" fill="#fff" stroke="#999" stroke-width=".5"/><circle cx="1844.5" cy="997.5" r="32.8" fill="#0a9de6" stroke="#0b6ea8" stroke-width=".6"/><path d="M1816 980C1826 972 1850 974 1862 984C1872 994 1870 1008 1858 1012C1840 1017 1822 1012 1815 1004C1809 996 1810 986 1816 980z" fill="#fff" stroke="#777" stroke-width=".5"/><ellipse cx="1840" cy="975.5" rx="7.6" ry="9" fill="#fff" stroke="#666" stroke-width=".6" transform="rotate(20 1840 975.5)"/><ellipse cx="1852.5" cy="981.5" rx="7.6" ry="8.6" fill="#fff" stroke="#666" stroke-width=".6" transform="rotate(20 1852.5 981.5)"/><path d="M1837 976.5C1839 979.5 1842 979.5 1844 977" fill="none" stroke="#111" stroke-width="1"/><ellipse cx="1848" cy="980.5" rx="1.7" ry="2.4" fill="#111" transform="rotate(20 1848 980.5)"/><circle cx="1848.2" cy="980.2" r=".6" fill="#fff"/><circle cx="1838.8" cy="985.3" r="4.6" fill="#e60026"/><circle cx="1840" cy="984.2" r="1.2" fill="#fff"/><path d="M1837 990C1834 996 1831 1002 1829 1008" fill="none" stroke="#666" stroke-width=".6"/><path d="M1812 1000C1822 1013 1850 1016 1866 1002" fill="none" stroke="#666" stroke-width=".7"/><path d="M1814 981L1829 988M1812 989L1826 991M1820 976L1830 985M1845 994L1866 993M1845 998L1865 1003M1844 1002L1859 1012" stroke="#666" stroke-width=".6" fill="none"/><path d="M1827 1020C1832 1026 1842 1029 1850 1027" fill="none" stroke="#d81020" stroke-width="2.2"/><path d="M1873 1008C1872 1014 1870 1018 1866 1022" fill="none" stroke="#d81020" stroke-width="1.6"/><path d="M1812 1018C1818 1014 1828 1018 1832 1024C1830 1030 1816 1030 1812 1026C1810 1023 1810 1020 1812 1018z" fill="#0a9de6" stroke="#0b6ea8" stroke-width=".5"/><path d="M1811 1008C1815 1005 1820 1009 1824 1014C1820 1018 1814 1018 1811 1015C1809 1012 1809 1010 1811 1008z" fill="#fff" stroke="#888" stroke-width=".5"/><ellipse cx="1852.5" cy="1024" rx="8" ry="7" fill="#fff" stroke="#888" stroke-width=".5"/><circle cx="1836.8" cy="1030.5" r="4.8" fill="#f2d21a" stroke="#8a7a10" stroke-width=".6"/><circle cx="1836.5" cy="1031.5" r="1.6" fill="#6a4a70"/><path d="M1832.3 1029h9" stroke="#8a7a10" stroke-width=".6"/></svg>
</body></html>
